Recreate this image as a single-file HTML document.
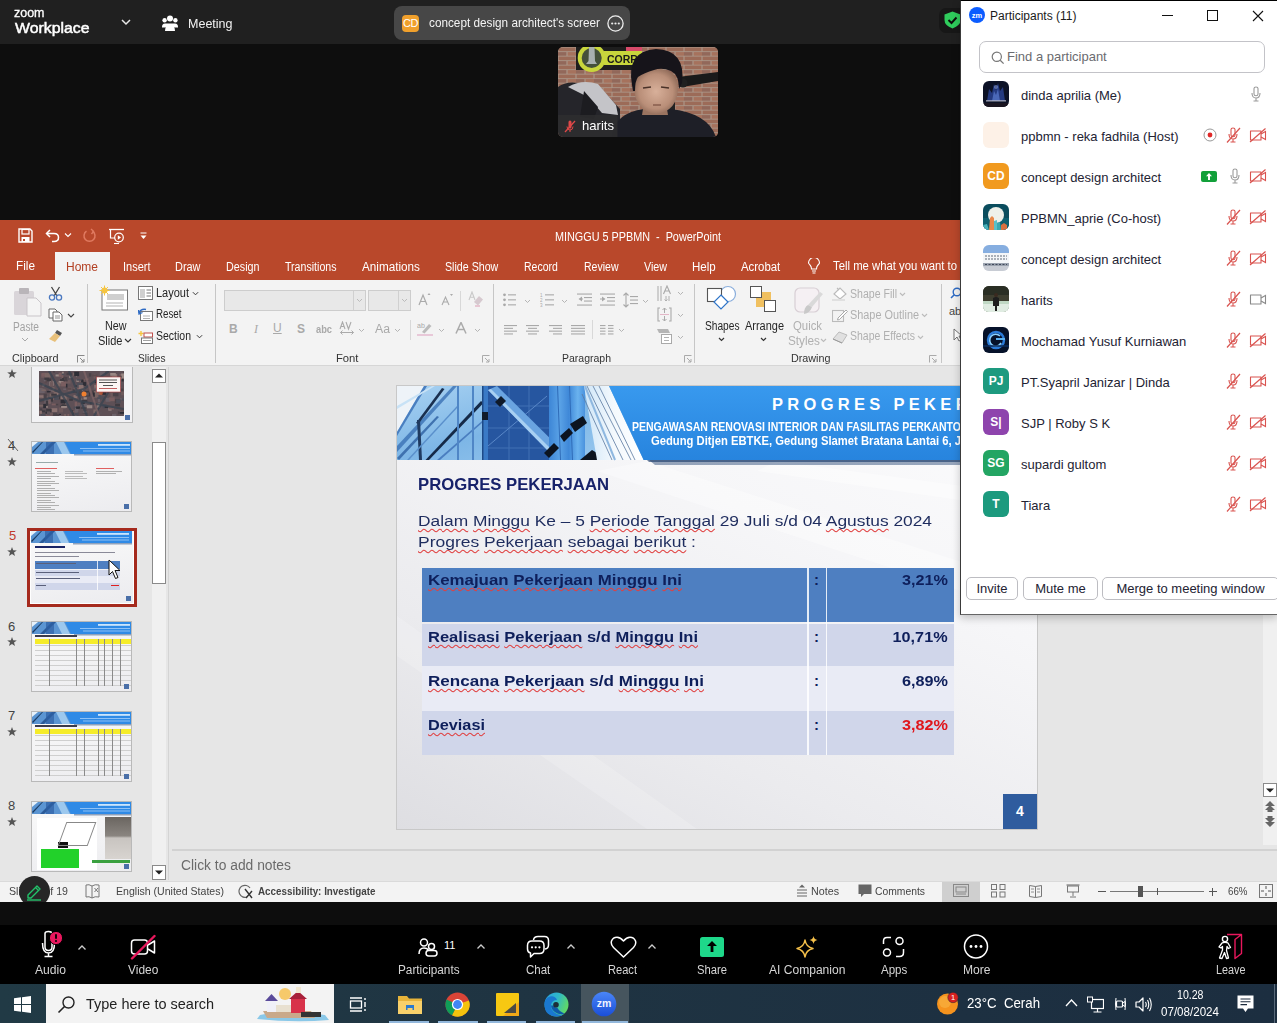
<!DOCTYPE html>
<html><head><meta charset="utf-8">
<style>
*{margin:0;padding:0;box-sizing:border-box}
html,body{width:1277px;height:1023px;overflow:hidden;background:#0e0e0e;font-family:"Liberation Sans",sans-serif;position:relative}
.abs{position:absolute}
.t{position:absolute;white-space:nowrap;line-height:1}
#topbar{left:0;top:0;width:1277px;height:44px;background:#202020}
#black{left:0;top:44px;width:1277px;height:176px;background:#0e0e0e}
#ppt{left:0;top:220px;width:1277px;height:682px;background:#e6e6e6}
#title{left:0;top:220px;width:1277px;height:60px;background:#b9482b}
#ribbon{left:0;top:280px;width:1277px;height:86px;background:#f3f3f3;border-bottom:1px solid #d6d6d6}
#band{left:0;top:902px;width:1277px;height:23px;background:#0d0d0d}
#ztool{left:0;top:925px;width:1277px;height:59px;background:#000}
#taskbar{left:0;top:984px;width:1277px;height:39px;background:linear-gradient(90deg,#213a45 0%,#1f3442 40%,#1d3041 75%,#1c2e40 100%)}
#panel{left:960px;top:0;width:317px;height:615px;background:#fff;border-left:1px solid #3a3a3a;border-top:1px solid #000;border-bottom:1px solid #666;box-shadow:0 3px 8px rgba(0,0,0,0.22)}
.av{left:22px;width:26px;height:26px;border-radius:6px;color:#fff;font-weight:700;font-size:12px;line-height:26px;text-align:center;overflow:hidden}
.nm{left:60px;font-size:13px;color:#232333}
.btn{border:1px solid #bdbdc2;border-radius:5px;font-size:13px;color:#232333;text-align:center;line-height:21px;background:#fff}
.zl{font-size:12.5px;color:#d6d6d6}
.sq{text-decoration:underline wavy #e04040;text-decoration-thickness:1px;text-underline-offset:2px;text-decoration-skip-ink:none}
.img1{background:radial-gradient(circle at 50% 35%,#5a7ac8 0%,#2a3a80 35%,#0d1230 75%,#080a18 100%)}
.img4{background:radial-gradient(circle at 50% 42%,#f4f4f0 0 28%,#0d5a6a 30%,#0a3a4a 100%)}
.img5{background:linear-gradient(180deg,#8ab0e0 0%,#a8c4e8 30%,#e8eef4 32%,#c8ccd8 55%,#f0f0f4 60%,#9aa0b0 80%,#e8e8ee 100%)}
.img6{background:linear-gradient(180deg,#3a3a2a 0%,#4a4a34 45%,#a8c8b0 60%,#d8e8d8 100%)}
.img7{background:radial-gradient(circle at 50% 50%,#4ab0f0 0%,#1a60b0 25%,#0a2a5a 50%,#040c20 100%)}
</style></head><body>
<div id="black" class="abs"></div>
<!-- TOP ZOOM BAR -->
<div id="topbar" class="abs">
  <div class="t" style="left: 14px; top: 6px; font-size: 13px; font-weight: 400; color: rgb(255, 255, 255); -webkit-text-stroke: 0.3px rgb(255, 255, 255); transform: scaleX(0.9592); transform-origin: left top;">zoom</div>
  <div class="t" style="left: 14.5px; top: 20px; font-size: 15.5px; font-weight: 400; color: rgb(255, 255, 255); -webkit-text-stroke: 0.5px rgb(255, 255, 255); transform: scaleX(1.0214); transform-origin: left top;">Workplace</div>
  <svg class="abs" style="left:120px;top:17px" width="12" height="10" viewBox="0 0 12 10"><path d="M2 3 L6 7 L10 3" stroke="#e8e8e8" stroke-width="1.5" fill="none"></path></svg>
  <svg class="abs" style="left:161px;top:14px" width="18" height="18" viewBox="0 0 18 18" fill="#fff">
    <circle cx="9" cy="4.5" r="3"></circle><circle cx="3.6" cy="6.3" r="2.2"></circle><circle cx="14.4" cy="6.3" r="2.2"></circle>
    <path d="M1 13 Q1 9.5 4 9.5 L14 9.5 Q17 9.5 17 13 L17 13.5 L1 13.5Z"></path>
    <path d="M4 17 Q4 11 9 11 Q14 11 14 17Z"></path>
  </svg>
  <div class="t" style="left: 188px; top: 16.5px; font-size: 13.5px; color: rgb(242, 242, 242); transform: scaleX(0.9265); transform-origin: left top;">Meeting</div>
  <div class="abs" style="left:394px;top:6px;width:236px;height:34px;background:#474747;border-radius:8px"></div>
  <div class="abs" style="left:402px;top:15px;width:17px;height:17px;background:#f0a02c;border-radius:4px;color:#fff;font-size:11px;line-height:17px;text-align:center;letter-spacing:-0.5px">CD</div>
  <div class="t" style="left: 428.6px; top: 16.5px; font-size: 12.8px; color: rgb(244, 244, 244); transform: scaleX(0.9195); transform-origin: left top;">concept design architect's screer</div>
  <svg class="abs" style="left:607px;top:15px" width="17" height="17" viewBox="0 0 17 17"><circle cx="8.5" cy="8.5" r="7.6" stroke="#eee" stroke-width="1.3" fill="none"></circle><circle cx="5.2" cy="8.5" r="1.1" fill="#eee"></circle><circle cx="8.5" cy="8.5" r="1.1" fill="#eee"></circle><circle cx="11.8" cy="8.5" r="1.1" fill="#eee"></circle></svg>
  <div class="abs" style="left:939px;top:8px;width:40px;height:25px;background:#171717;border-radius:7px"></div><svg class="abs" style="left:944px;top:11px" width="17" height="18" viewBox="0 0 17 18"><path d="M8.5 0.5 L16.5 3.5 L16.5 9 Q16.5 14.5 8.5 17.5 Q0.5 14.5 0.5 9 L0.5 3.5Z" fill="#2fcc5c"></path><path d="M4.5 9 L7.5 12 L12.5 6.5" stroke="#0c0c0c" stroke-width="1.9" fill="none"></path></svg>
</div>
<!-- VIDEO -->
<div class="abs" style="left:558px;top:47px;width:160px;height:90px;border-radius:5px;overflow:hidden;background:#8a6a5a">
  <svg width="160" height="90" viewBox="0 0 160 90" style="filter:blur(0.4px)">
    <defs>
      <pattern id="brick" width="18" height="9" patternUnits="userSpaceOnUse">
        <rect width="18" height="9" fill="#b9a595"></rect>
        <rect x="0.6" y="0.6" width="16.8" height="3.6" fill="#a8725c"></rect>
        <rect x="-8.4" y="5.1" width="16.8" height="3.6" fill="#9c6e5e"></rect>
        <rect x="9.6" y="5.1" width="16.8" height="3.6" fill="#b47a62"></rect>
      </pattern>
      <radialGradient id="face" cx="50%" cy="50%" r="55%"><stop offset="0" stop-color="#d8b09a"></stop><stop offset="0.7" stop-color="#b98e78"></stop><stop offset="1" stop-color="#8e6a58"></stop></radialGradient>
    </defs>
    <rect width="160" height="90" fill="url(#brick)"></rect>
    <rect width="160" height="90" fill="#6a5048" opacity="0.18"></rect>
    <rect x="18" y="0" width="66" height="23" fill="#1e1e1e"></rect>
    <circle cx="33.7" cy="11" r="14" fill="#c8d63c"></circle>
    <circle cx="33.7" cy="11" r="10" fill="#44503a"></circle>
    <path d="M31 0 L36.5 0 L37 14 L39 17 L28 17 L30.5 14Z" fill="#a8b0b0"></path>
    <rect x="46" y="4" width="38" height="14" fill="#c8d63c"></rect>
    <rect x="46" y="4" width="4" height="14" fill="#c8d63c"></rect>
    <text x="49" y="15.7" font-family="Liberation Sans" font-weight="700" font-size="10.5" fill="#1a1a1a">CORR</text>
    <rect x="68" y="0" width="16" height="4" fill="#d84a6a"></rect>
    <path d="M0 40 Q8 34 20 36 L40 38 L62 62 L62 90 L0 90Z" fill="#25252a"></path>
    <path d="M10 40 Q24 32 40 37 L58 58 L60 68 L44 66 L30 50 L18 44Z" fill="#c4c4c8"></path>
    <path d="M26 44 L40 60 L36 72 L22 70Z" fill="#1c1c20"></path>
    <path d="M120 30 L160 25 L160 34 L124 40Z" fill="#1a1a1a"></path>
    <circle cx="125" cy="36" r="4.5" fill="#202020"></circle>
    <rect x="110" y="36" width="7" height="30" fill="#222"></rect>
    <path d="M54 90 Q56 66 86 62 L112 62 Q150 66 158 90Z" fill="#1e1f27"></path>
    <path d="M86 56 L108 56 L110 68 L84 68Z" fill="#9a7460"></path>
    <path d="M76 38 Q76 22 98 22 Q120 22 120 40 Q120 64 98 67 Q76 64 76 38Z" fill="url(#face)"></path>
    <path d="M74 38 Q68 4 98 2 Q128 3 124 36 L121 42 Q121 28 113 24 Q104 20 96 23 Q86 26 80 30 Q77 34 77 44 L75 44Z" fill="#16141a"></path>
    <path d="M85 41 L93 40 M103 40 L111 41" stroke="#4a3228" stroke-width="1.6"></path>
    <path d="M95 58 L103 58" stroke="#7a5040" stroke-width="1.2"></path>
    <rect x="0" y="68" width="59.5" height="22" fill="#2e2e30" opacity="0.8"></rect>
  </svg>
  <svg class="abs" style="left:6px;top:73px" width="12" height="13" viewBox="0 0 12 13"><path d="M4.5 2 Q4.5 0.5 6 0.5 Q7.5 0.5 7.5 2 L7.5 7 Q7.5 8.5 6 8.5 Q4.5 8.5 4.5 7Z" fill="#e04848"></path><path d="M3 6.5 Q3 10 6 10 Q9 10 9 6.5 M6 10 L6 12" stroke="#e04848" stroke-width="1" fill="none"></path><path d="M1 12 L11 1" stroke="#e04848" stroke-width="1.3"></path></svg>
  <div class="t" style="left: 24px; top: 72px; font-size: 13px; color: rgb(255, 255, 255); transform: scaleX(1.0064); transform-origin: left top;">harits</div>
</div>
<!-- POWERPOINT -->
<div id="ppt" class="abs"></div>
<div id="title" class="abs"></div>
    <!-- QAT -->
    <svg class="abs" style="left:18px;top:228px" width="15" height="15" viewBox="0 0 15 15"><path d="M1 1 H12 L14 3 V14 H1Z" fill="none" stroke="#fff" stroke-width="1.4"></path><rect x="4" y="1.5" width="7" height="4.5" fill="none" stroke="#fff" stroke-width="1.2"></rect><rect x="3.5" y="9" width="8" height="5" fill="#fff"></rect><rect x="5" y="11" width="2" height="2" fill="#b9482b"></rect></svg>
    <svg class="abs" style="left:45px;top:228px" width="16" height="16" viewBox="0 0 16 16"><path d="M5 2 L1.5 5.5 L5 9" fill="none" stroke="#fff" stroke-width="1.5"></path><path d="M2 5.5 H9 Q13.5 5.5 13.5 9.5 Q13.5 13.5 9 13.5 H7" fill="none" stroke="#fff" stroke-width="1.5"></path></svg>
    <svg class="abs" style="left:64px;top:232px" width="8" height="6" viewBox="0 0 8 6"><path d="M1 1.5 L4 4.5 L7 1.5" fill="none" stroke="#fff" stroke-width="1.1"></path></svg>
    <svg class="abs" style="left:82px;top:228px" width="15" height="15" viewBox="0 0 15 15"><path d="M10.5 3.2 A5.5 5.5 0 1 1 4.5 3.2" fill="none" stroke="#e07a60" stroke-width="1.5"></path><path d="M9 1 L11.5 3.3 L9.5 6" fill="none" stroke="#e07a60" stroke-width="1.4"></path></svg>
    <svg class="abs" style="left:108px;top:228px" width="17" height="17" viewBox="0 0 17 17"><path d="M1 1.5 H16" stroke="#fff" stroke-width="1.3"></path><path d="M2.5 2 V10 H7" fill="none" stroke="#fff" stroke-width="1.2"></path><circle cx="11" cy="9.5" r="4.3" fill="none" stroke="#fff" stroke-width="1.2"></circle><path d="M9.8 7.3 L13 9.5 L9.8 11.7Z" fill="#fff"></path><path d="M6 15.5 H11" stroke="#fff" stroke-width="1.1"></path></svg>
    <svg class="abs" style="left:140px;top:232px" width="7" height="8" viewBox="0 0 7 8"><path d="M0.5 1 H6.5" stroke="#fff" stroke-width="1"></path><path d="M0.5 3.5 L3.5 7 L6.5 3.5Z" fill="#fff"></path></svg>
    <div class="t" style="left: 555px; top: 231px; font-size: 12px; color: rgb(255, 255, 255); white-space: pre; transform: scaleX(0.9019); transform-origin: left top;">MINGGU 5 PPBMN  -  PowerPoint</div>
    <!-- tabs -->
    <div class="abs" style="left:55px;top:252px;width:55px;height:28px;background:#f3f3f3"></div>
    <div class="t" style="left: 16px; top: 260px; font-size: 12px; color: rgb(255, 255, 255); transform: scaleX(0.9822); transform-origin: left top;">File</div>
    <div class="t" style="left: 66px; top: 261px; font-size: 12px; color: rgb(178, 63, 34); transform: scaleX(0.9995); transform-origin: left top;">Home</div>
    <div class="t" style="left: 122.5px; top: 261px; font-size: 12px; color: rgb(255, 255, 255); transform: scaleX(0.9162); transform-origin: left top;">Insert</div>
    <div class="t" style="left: 174.5px; top: 261px; font-size: 12px; color: rgb(255, 255, 255); transform: scaleX(0.9102); transform-origin: left top;">Draw</div>
    <div class="t" style="left: 226px; top: 261px; font-size: 12px; color: rgb(255, 255, 255); transform: scaleX(0.8967); transform-origin: left top;">Design</div>
    <div class="t" style="left: 285px; top: 261px; font-size: 12px; color: rgb(255, 255, 255); transform: scaleX(0.8841); transform-origin: left top;">Transitions</div>
    <div class="t" style="left: 362px; top: 261px; font-size: 12px; color: rgb(255, 255, 255); transform: scaleX(0.9768); transform-origin: left top;">Animations</div>
    <div class="t" style="left: 445px; top: 261px; font-size: 12px; color: rgb(255, 255, 255); transform: scaleX(0.8876); transform-origin: left top;">Slide Show</div>
    <div class="t" style="left: 524px; top: 261px; font-size: 12px; color: rgb(255, 255, 255); transform: scaleX(0.8737); transform-origin: left top;">Record</div>
    <div class="t" style="left: 583.5px; top: 261px; font-size: 12px; color: rgb(255, 255, 255); transform: scaleX(0.8765); transform-origin: left top;">Review</div>
    <div class="t" style="left: 644px; top: 261px; font-size: 12px; color: rgb(255, 255, 255); transform: scaleX(0.8916); transform-origin: left top;">View</div>
    <div class="t" style="left: 692px; top: 261px; font-size: 12px; color: rgb(255, 255, 255); transform: scaleX(0.96); transform-origin: left top;">Help</div>
    <div class="t" style="left: 741px; top: 261px; font-size: 12px; color: rgb(255, 255, 255); transform: scaleX(0.9478); transform-origin: left top;">Acrobat</div>
    <svg class="abs" style="left:807px;top:258px" width="14" height="16" viewBox="0 0 14 16"><path d="M4.5 11 Q4.5 8.5 3 7 Q1.5 5.3 1.5 5 A5.5 5.5 0 1 1 12.5 5 Q12.5 5.5 11 7 Q9.5 8.5 9.5 11Z" fill="none" stroke="#fff" stroke-width="1.1"></path><path d="M5 13 H9 M5.5 15 H8.5" stroke="#fff" stroke-width="1.1"></path></svg>
    <div class="t" style="left: 833px; top: 260px; font-size: 12px; color: rgb(255, 255, 255); transform: scaleX(0.9436); transform-origin: left top;">Tell me what you want to</div>
<div id="ribbon" class="abs"></div>
<!-- Clipboard group -->
<svg class="abs" style="left:13px;top:287px" width="29" height="30" viewBox="0 0 29 30"><rect x="1" y="4" width="20" height="24" rx="1.5" fill="#d9d5d9"></rect><rect x="6" y="1" width="10" height="6" rx="1" fill="#b9b5b9"></rect><path d="M14 11 H23 L28 16 V29 H14Z" fill="#f4f4f4" stroke="#c9c5c9" stroke-width="1"></path></svg>
<div class="t" style="left: 12.5px; top: 321px; font-size: 12px; color: rgb(163, 163, 163); transform: scaleX(0.8473); transform-origin: left top;">Paste</div>
<svg class="abs" style="left:21px;top:337px" width="8" height="5" viewBox="0 0 8 5"><path d="M1 1 L4 4 L7 1" fill="none" stroke="#a8a8a8" stroke-width="1"></path></svg>
<svg class="abs" style="left:48px;top:286px" width="15" height="15" viewBox="0 0 15 15"><path d="M3.5 1 L9 10 M11.5 1 L6 10" stroke="#444" stroke-width="1.3"></path><circle cx="4" cy="11.5" r="2.6" fill="none" stroke="#4a78c0" stroke-width="1.3"></circle><circle cx="11" cy="11.5" r="2.6" fill="none" stroke="#4a78c0" stroke-width="1.3"></circle></svg>
<svg class="abs" style="left:48px;top:308px" width="15" height="14" viewBox="0 0 15 14"><path d="M1 1 H7 L9 3 V10 H1Z" fill="#fff" stroke="#666" stroke-width="1"></path><path d="M5 4 H11 L14 7 V13 H5Z" fill="#fff" stroke="#666" stroke-width="1"></path><path d="M7 8 H12 M7 10 H12" stroke="#777" stroke-width="0.8"></path></svg>
<svg class="abs" style="left:67px;top:313px" width="8" height="5" viewBox="0 0 8 5"><path d="M1 1 L4 4 L7 1" fill="none" stroke="#444" stroke-width="1.1"></path></svg>
<svg class="abs" style="left:48px;top:329px" width="15" height="14" viewBox="0 0 15 14"><path d="M9 1 L14 4 L12 7 L7 4Z" fill="#555"></path><path d="M7 4 L12 7 L7 13 L1 10Z" fill="#e8c07a"></path></svg>
<div class="t" style="left: 12px; top: 353px; font-size: 11px; color: rgb(51, 51, 51); transform: scaleX(0.9874); transform-origin: left top;">Clipboard</div>
<svg class="abs" style="left:77px;top:355px" width="8" height="8" viewBox="0 0 8 8"><path d="M0.5 7.5 V0.5 H7.5" fill="none" stroke="#888" stroke-width="1"></path><path d="M3 3 L7 7 M4 7 H7 V4" fill="none" stroke="#888" stroke-width="1"></path></svg>
<div class="abs" style="left:87px;top:284px;width:1px;height:79px;background:#c6c6c6"></div>
<!-- Slides group -->
<svg class="abs" style="left:99px;top:285px" width="30" height="27" viewBox="0 0 30 27"><rect x="3" y="5" width="25.5" height="20" fill="#fff" stroke="#777" stroke-width="1"></rect><rect x="8" y="9" width="17" height="6" fill="#cfcfcf"></rect><path d="M7 18 H24 M7 21 H24" stroke="#aaa" stroke-width="0.9"></path><circle cx="5.5" cy="5.5" r="3" fill="#f5c542"></circle><path d="M5.5 0.5 V10.5 M0.5 5.5 H10.5 M2 2 L9 9 M9 2 L2 9" stroke="#f5c542" stroke-width="1"></path></svg>
<div class="t" style="left: 104.5px; top: 320px; font-size: 12px; color: rgb(38, 38, 38); transform: scaleX(0.8953); transform-origin: left top;">New</div>
<div class="t" style="left: 98px; top: 335px; font-size: 12px; color: rgb(38, 38, 38); transform: scaleX(0.918); transform-origin: left top;">Slide</div>
<svg class="abs" style="left:124px;top:338px" width="8" height="5" viewBox="0 0 8 5"><path d="M1 1 L4 4 L7 1" fill="none" stroke="#333" stroke-width="1.1"></path></svg>
<svg class="abs" style="left:138px;top:286px" width="15" height="14" viewBox="0 0 15 14"><rect x="0.5" y="0.5" width="14" height="13" fill="#fff" stroke="#777" stroke-width="1"></rect><rect x="2" y="3" width="5" height="9" fill="#cfcfcf"></rect><path d="M8.5 4 H13 M8.5 7 H13 M8.5 10 H13" stroke="#777" stroke-width="1"></path></svg>
<div class="t" style="left: 156px; top: 287px; font-size: 12px; color: rgb(38, 38, 38); transform: scaleX(0.9159); transform-origin: left top;">Layout</div>
<svg class="abs" style="left:192px;top:291px" width="7" height="5" viewBox="0 0 8 5"><path d="M1 1 L4 4 L7 1" fill="none" stroke="#333" stroke-width="1.1"></path></svg>
<svg class="abs" style="left:138px;top:308px" width="15" height="13" viewBox="0 0 15 13"><rect x="2.5" y="3.5" width="12" height="9" fill="#fff" stroke="#777" stroke-width="1"></rect><path d="M5 8 H12 M5 10.5 H12" stroke="#aaa" stroke-width="0.9"></path><path d="M1 5 Q3 0.5 8 1.5" fill="none" stroke="#2e6bc4" stroke-width="1.5"></path><path d="M0.5 2 L1 6 L4.5 4.5" fill="none" stroke="#2e6bc4" stroke-width="1.3"></path></svg>
<div class="t" style="left: 156px; top: 308px; font-size: 12px; color: rgb(38, 38, 38); transform: scaleX(0.8132); transform-origin: left top;">Reset</div>
<svg class="abs" style="left:138px;top:330px" width="15" height="14" viewBox="0 0 15 14"><path d="M3 1 V6 M0.5 3.5 H5.5" stroke="#f5c542" stroke-width="1.4"></path><rect x="6" y="3" width="8.5" height="4" fill="#fff" stroke="#c0504d" stroke-width="1"></rect><rect x="3.5" y="8" width="11" height="5.5" fill="#fff" stroke="#777" stroke-width="1"></rect><path d="M5 10.5 H13" stroke="#999" stroke-width="0.9"></path></svg>
<div class="t" style="left: 156px; top: 330px; font-size: 12px; color: rgb(38, 38, 38); transform: scaleX(0.8743); transform-origin: left top;">Section</div>
<svg class="abs" style="left:196px;top:334px" width="7" height="5" viewBox="0 0 8 5"><path d="M1 1 L4 4 L7 1" fill="none" stroke="#333" stroke-width="1.1"></path></svg>
<div class="t" style="left: 138px; top: 353px; font-size: 11px; color: rgb(51, 51, 51); transform: scaleX(0.9176); transform-origin: left top;">Slides</div>
<div class="abs" style="left:215px;top:284px;width:1px;height:79px;background:#c6c6c6"></div>
<!-- Font group -->
<div class="abs" style="left:224px;top:290px;width:142px;height:21px;background:#e8e8e8;border:1px solid #cdcdcd"></div>
<div class="abs" style="left:353px;top:291px;width:1px;height:19px;background:#d0d0d0"></div>
<svg class="abs" style="left:356px;top:298px" width="7" height="5" viewBox="0 0 7 5"><path d="M1 1 L3.5 3.5 L6 1" fill="none" stroke="#bbb" stroke-width="1"></path></svg>
<div class="abs" style="left:368px;top:290px;width:43px;height:21px;background:#e8e8e8;border:1px solid #cdcdcd"></div>
<div class="abs" style="left:398px;top:291px;width:1px;height:19px;background:#d0d0d0"></div>
<svg class="abs" style="left:401px;top:298px" width="7" height="5" viewBox="0 0 7 5"><path d="M1 1 L3.5 3.5 L6 1" fill="none" stroke="#bbb" stroke-width="1"></path></svg>
<svg class="abs" style="left:418px;top:292px" width="14" height="14" viewBox="0 0 14 14"><path d="M1 13 L5 3 L9 13 M2.5 9.5 H7.5" fill="none" stroke="#aaa" stroke-width="1.2"></path><path d="M9.5 3 L11 1 L12.5 3Z" fill="#aaa"></path></svg>
<svg class="abs" style="left:441px;top:293px" width="13" height="13" viewBox="0 0 13 13"><path d="M1 12 L4.5 4 L8 12 M2.3 9 H6.7" fill="none" stroke="#aaa" stroke-width="1.1"></path><path d="M9 1 L10.5 3 L12 1Z" fill="#aaa"></path></svg>
<div class="abs" style="left:460px;top:291px;width:1px;height:20px;background:#d8d8d8"></div>
<svg class="abs" style="left:468px;top:291px" width="16" height="16" viewBox="0 0 16 16"><path d="M1 9 L4 1 L7 9 M2 6.3 H6" fill="none" stroke="#c9c9c9" stroke-width="1.1"></path><path d="M6 11 L11 5 L15 8.5 L10 14.5Z" fill="#d6c9cf"></path><path d="M7 15 H12" stroke="#e3b7c7" stroke-width="1.5"></path></svg>
<div class="t" style="left:229px;top:323px;font-size:12px;font-weight:700;color:#a9a9a9">B</div>
<div class="t" style="left:254px;top:323px;font-size:12px;font-style:italic;color:#a9a9a9;font-family:'Liberation Serif'">I</div>
<div class="t" style="left:273px;top:322px;font-size:12px;color:#a9a9a9;text-decoration:underline">U</div>
<div class="t" style="left:297px;top:323px;font-size:12px;font-weight:700;color:#a9a9a9">S</div>
<div class="t" style="left: 316px; top: 324px; font-size: 11px; font-weight: 700; color: rgb(169, 169, 169); transform: scaleX(0.8435); transform-origin: left top;">abc</div>
<svg class="abs" style="left:339px;top:321px" width="16" height="14" viewBox="0 0 16 14"><path d="M1 8 L3.5 1 L6 8 M1.8 5.5 H5.2 M7 1 L9.5 8 L12 1" fill="none" stroke="#aaa" stroke-width="1.1"></path><path d="M1.5 11.5 H14.5 M3.5 9.5 L1.5 11.5 L3.5 13.5 M12.5 9.5 L14.5 11.5 L12.5 13.5" fill="none" stroke="#aaa" stroke-width="1"></path></svg>
<svg class="abs" style="left:358px;top:328px" width="7" height="5" viewBox="0 0 7 5"><path d="M1 1 L3.5 3.5 L6 1" fill="none" stroke="#b5b5b5" stroke-width="1"></path></svg>
<div class="t" style="left: 375px; top: 323px; font-size: 12px; color: rgb(169, 169, 169); transform: scaleX(1.0213); transform-origin: left top;">Aa</div>
<svg class="abs" style="left:394px;top:328px" width="7" height="5" viewBox="0 0 7 5"><path d="M1 1 L3.5 3.5 L6 1" fill="none" stroke="#b5b5b5" stroke-width="1"></path></svg>
<div class="abs" style="left:410px;top:320px;width:1px;height:20px;background:#d8d8d8"></div>
<svg class="abs" style="left:417px;top:321px" width="16" height="15" viewBox="0 0 16 15"><text x="0" y="7" font-family="Liberation Sans" font-size="7" fill="#aaa">ab</text><path d="M5 11 L12 3 L14.5 5 L7.5 12.5Z" fill="#bbb"></path><rect x="0" y="13" width="16" height="2" fill="#e8c8d8"></rect></svg>
<svg class="abs" style="left:438px;top:328px" width="7" height="5" viewBox="0 0 7 5"><path d="M1 1 L3.5 3.5 L6 1" fill="none" stroke="#b5b5b5" stroke-width="1"></path></svg>
<svg class="abs" style="left:455px;top:322px" width="12" height="12" viewBox="0 0 12 12"><path d="M1 11.5 L6 0.5 L11 11.5 M3 7.5 H9" fill="none" stroke="#aaa" stroke-width="1.5"></path></svg>
<svg class="abs" style="left:474px;top:328px" width="7" height="5" viewBox="0 0 7 5"><path d="M1 1 L3.5 3.5 L6 1" fill="none" stroke="#b5b5b5" stroke-width="1"></path></svg>
<div class="t" style="left: 335.5px; top: 353px; font-size: 11px; color: rgb(51, 51, 51); transform: scaleX(1.022); transform-origin: left top;">Font</div>
<svg class="abs" style="left:482px;top:355px" width="8" height="8" viewBox="0 0 8 8"><path d="M0.5 7.5 V0.5 H7.5" fill="none" stroke="#aaa" stroke-width="1"></path><path d="M3 3 L7 7 M4 7 H7 V4" fill="none" stroke="#aaa" stroke-width="1"></path></svg>
<div class="abs" style="left:493px;top:284px;width:1px;height:79px;background:#c6c6c6"></div>
<!-- Paragraph group -->
<svg class="abs" style="left:503px;top:293px" width="14" height="14" viewBox="0 0 14 14"><circle cx="1.5" cy="1.8" r="1.4" fill="#a9a9a9"></circle><circle cx="1.5" cy="6.8" r="1.4" fill="#a9a9a9"></circle><circle cx="1.5" cy="11.8" r="1.4" fill="#a9a9a9"></circle><rect x="5" y="1.3" width="8" height="1.1" fill="#a9a9a9"></rect><rect x="5" y="6.3" width="8" height="1.1" fill="#a9a9a9"></rect><rect x="5" y="11.3" width="8" height="1.1" fill="#a9a9a9"></rect></svg>
<svg class="abs" style="left:524px;top:299px" width="7" height="5" viewBox="0 0 7 5"><path d="M1 1 L3.5 3.5 L6 1" fill="none" stroke="#b5b5b5" stroke-width="1"></path></svg>
<svg class="abs" style="left:540px;top:293px" width="15" height="14" viewBox="0 0 15 14"><text x="0" y="4" font-size="4.5" font-family="Liberation Sans" fill="#a9a9a9">1</text><text x="0" y="9" font-size="4.5" font-family="Liberation Sans" fill="#a9a9a9">2</text><text x="0" y="14" font-size="4.5" font-family="Liberation Sans" fill="#a9a9a9">3</text><rect x="5" y="1.3" width="9" height="1.1" fill="#a9a9a9"></rect><rect x="5" y="6.3" width="9" height="1.1" fill="#a9a9a9"></rect><rect x="5" y="11.3" width="9" height="1.1" fill="#a9a9a9"></rect></svg>
<svg class="abs" style="left:561px;top:299px" width="7" height="5" viewBox="0 0 7 5"><path d="M1 1 L3.5 3.5 L6 1" fill="none" stroke="#b5b5b5" stroke-width="1"></path></svg>
<svg class="abs" style="left:577px;top:293px" width="15" height="13" viewBox="0 0 15 13"><rect x="0" y="0.5" width="15" height="1.1" fill="#a9a9a9"></rect><rect x="7" y="4" width="8" height="1.1" fill="#a9a9a9"></rect><rect x="7" y="7.5" width="8" height="1.1" fill="#a9a9a9"></rect><rect x="0" y="11.5" width="15" height="1.1" fill="#a9a9a9"></rect><path d="M5 3.5 L1.5 6 L5 8.5Z" fill="#a9a9a9"></path><rect x="3" y="5.5" width="3" height="1" fill="#a9a9a9"></rect></svg>
<svg class="abs" style="left:600px;top:293px" width="15" height="13" viewBox="0 0 15 13"><rect x="0" y="0.5" width="15" height="1.1" fill="#a9a9a9"></rect><rect x="7" y="4" width="8" height="1.1" fill="#a9a9a9"></rect><rect x="7" y="7.5" width="8" height="1.1" fill="#a9a9a9"></rect><rect x="0" y="11.5" width="15" height="1.1" fill="#a9a9a9"></rect><path d="M2 3.5 L5.5 6 L2 8.5Z" fill="#a9a9a9"></path><rect x="0" y="5.5" width="3" height="1" fill="#a9a9a9"></rect></svg>
<svg class="abs" style="left:623px;top:292px" width="15" height="16" viewBox="0 0 15 16"><path d="M3 1 V15 M0.5 3.5 L3 1 L5.5 3.5 M0.5 12.5 L3 15 L5.5 12.5" fill="none" stroke="#a9a9a9" stroke-width="1.1"></path><rect x="7" y="4" width="8" height="1.1" fill="#a9a9a9"></rect><rect x="7" y="7.5" width="8" height="1.1" fill="#a9a9a9"></rect><rect x="7" y="11" width="8" height="1.1" fill="#a9a9a9"></rect></svg>
<svg class="abs" style="left:642px;top:299px" width="7" height="5" viewBox="0 0 7 5"><path d="M1 1 L3.5 3.5 L6 1" fill="none" stroke="#b5b5b5" stroke-width="1"></path></svg>
<svg class="abs" style="left:657px;top:285px" width="15" height="17" viewBox="0 0 15 17"><path d="M1 1 V16 M4 1 V16" stroke="#a9a9a9" stroke-width="1"></path><path d="M6.5 9 L10 1 L13.5 9 M7.8 6 H12.2" fill="none" stroke="#a9a9a9" stroke-width="1.1"></path><path d="M9 11 V16 M12 11 V16 M7.5 14.5 L9 16 L10.5 14.5" fill="none" stroke="#a9a9a9" stroke-width="0.9"></path></svg>
<svg class="abs" style="left:677px;top:291px" width="7" height="5" viewBox="0 0 7 5"><path d="M1 1 L3.5 3.5 L6 1" fill="none" stroke="#b5b5b5" stroke-width="1"></path></svg>
<svg class="abs" style="left:657px;top:307px" width="15" height="15" viewBox="0 0 15 15"><path d="M3 1 H1 V14 H3 M12 1 H14 V14 H12" fill="none" stroke="#a9a9a9" stroke-width="1.1"></path><path d="M7.5 1 V6 M5.5 3 L7.5 1 L9.5 3 M7.5 9 V14 M5.5 12 L7.5 14 L9.5 12" fill="none" stroke="#a9a9a9" stroke-width="1"></path><rect x="3" y="7" width="9" height="1" fill="#e3b7c7"></rect></svg>
<svg class="abs" style="left:677px;top:313px" width="7" height="5" viewBox="0 0 7 5"><path d="M1 1 L3.5 3.5 L6 1" fill="none" stroke="#b5b5b5" stroke-width="1"></path></svg>
<svg class="abs" style="left:657px;top:329px" width="15" height="15" viewBox="0 0 15 15"><path d="M0 0 H11 L13 4 H2Z" fill="#b5b5b5"></path><rect x="4.5" y="5.5" width="10" height="9" fill="#fff" stroke="#a9a9a9" stroke-width="1"></rect><path d="M7 8.5 H12 M7 11.5 H12" stroke="#a9a9a9" stroke-width="0.9"></path></svg>
<svg class="abs" style="left:677px;top:335px" width="7" height="5" viewBox="0 0 7 5"><path d="M1 1 L3.5 3.5 L6 1" fill="none" stroke="#b5b5b5" stroke-width="1"></path></svg>
<svg class="abs" style="left:504px;top:325px" width="14" height="10" viewBox="0 0 14 10"><rect x="0" y="0.0" width="13" height="1.1" fill="#a9a9a9"></rect><rect x="0" y="2.8" width="9" height="1.1" fill="#a9a9a9"></rect><rect x="0" y="5.6" width="13" height="1.1" fill="#a9a9a9"></rect><rect x="0" y="8.399999999999999" width="9" height="1.1" fill="#a9a9a9"></rect></svg>
<svg class="abs" style="left:526px;top:325px" width="14" height="10" viewBox="0 0 14 10"><rect x="0" y="0.0" width="13" height="1.1" fill="#a9a9a9"></rect><rect x="2" y="2.8" width="9" height="1.1" fill="#a9a9a9"></rect><rect x="0" y="5.6" width="13" height="1.1" fill="#a9a9a9"></rect><rect x="2" y="8.399999999999999" width="9" height="1.1" fill="#a9a9a9"></rect></svg>
<svg class="abs" style="left:549px;top:325px" width="14" height="10" viewBox="0 0 14 10"><rect x="0" y="0.0" width="13" height="1.1" fill="#a9a9a9"></rect><rect x="4" y="2.8" width="9" height="1.1" fill="#a9a9a9"></rect><rect x="0" y="5.6" width="13" height="1.1" fill="#a9a9a9"></rect><rect x="4" y="8.399999999999999" width="9" height="1.1" fill="#a9a9a9"></rect></svg>
<svg class="abs" style="left:571px;top:325px" width="14" height="10" viewBox="0 0 14 10"><rect x="0" y="0.0" width="14" height="1.1" fill="#a9a9a9"></rect><rect x="0" y="2.8" width="14" height="1.1" fill="#a9a9a9"></rect><rect x="0" y="5.6" width="14" height="1.1" fill="#a9a9a9"></rect><rect x="0" y="8.399999999999999" width="14" height="1.1" fill="#a9a9a9"></rect></svg>
<div class="abs" style="left:592px;top:320px;width:1px;height:19px;background:#d8d8d8"></div>
<svg class="abs" style="left:600px;top:325px" width="14" height="10" viewBox="0 0 14 10"><rect x="0" y="0.0" width="5.5" height="1.1" fill="#a9a9a9"></rect><rect x="8" y="0.0" width="5.5" height="1.1" fill="#a9a9a9"></rect><rect x="0" y="2.8" width="5.5" height="1.1" fill="#a9a9a9"></rect><rect x="8" y="2.8" width="5.5" height="1.1" fill="#a9a9a9"></rect><rect x="0" y="5.6" width="5.5" height="1.1" fill="#a9a9a9"></rect><rect x="8" y="5.6" width="5.5" height="1.1" fill="#a9a9a9"></rect><rect x="0" y="8.399999999999999" width="5.5" height="1.1" fill="#a9a9a9"></rect><rect x="8" y="8.399999999999999" width="5.5" height="1.1" fill="#a9a9a9"></rect></svg>
<svg class="abs" style="left:618px;top:328px" width="7" height="5" viewBox="0 0 7 5"><path d="M1 1 L3.5 3.5 L6 1" fill="none" stroke="#b5b5b5" stroke-width="1"></path></svg>
<div class="t" style="left: 561.5px; top: 353px; font-size: 11px; color: rgb(51, 51, 51); transform: scaleX(0.9538); transform-origin: left top;">Paragraph</div>
<svg class="abs" style="left:684px;top:355px" width="8" height="8" viewBox="0 0 8 8"><path d="M0.5 7.5 V0.5 H7.5" fill="none" stroke="#aaa" stroke-width="1"></path><path d="M3 3 L7 7 M4 7 H7 V4" fill="none" stroke="#aaa" stroke-width="1"></path></svg>
<div class="abs" style="left:694px;top:284px;width:1px;height:79px;background:#c6c6c6"></div>
<!-- Drawing group -->
<svg class="abs" style="left:706px;top:285px" width="31" height="30" viewBox="0 0 31 30"><circle cx="22" cy="9" r="7.5" fill="#fff" stroke="#8aaedc" stroke-width="1.2"></circle><rect x="1.5" y="3.5" width="14" height="13" fill="#fff" stroke="#555" stroke-width="1.1"></rect><path d="M15 10 L22 17 L15 24 L8 17Z" fill="#fff" stroke="#2e74c8" stroke-width="1.2"></path></svg>
<div class="t" style="left: 704.5px; top: 320px; font-size: 12px; color: rgb(38, 38, 38); transform: scaleX(0.8476); transform-origin: left top;">Shapes</div>
<svg class="abs" style="left:718px;top:337px" width="7" height="5" viewBox="0 0 7 5"><path d="M1 1 L3.5 3.5 L6 1" fill="none" stroke="#333" stroke-width="1.2"></path></svg>
<svg class="abs" style="left:750px;top:286px" width="27" height="27" viewBox="0 0 27 27"><rect x="6" y="6" width="15" height="15" fill="#f0c060"></rect><rect x="0.5" y="0.5" width="11" height="11" fill="#fff" stroke="#555" stroke-width="1"></rect><rect x="14.5" y="14.5" width="11" height="11" fill="#fff" stroke="#555" stroke-width="1"></rect></svg>
<div class="t" style="left: 744.5px; top: 320px; font-size: 12px; color: rgb(38, 38, 38); transform: scaleX(0.9133); transform-origin: left top;">Arrange</div>
<svg class="abs" style="left:760px;top:337px" width="7" height="5" viewBox="0 0 7 5"><path d="M1 1 L3.5 3.5 L6 1" fill="none" stroke="#333" stroke-width="1.2"></path></svg>
<svg class="abs" style="left:794px;top:287px" width="30" height="29" viewBox="0 0 30 29"><rect x="1" y="1" width="24" height="24" rx="5" fill="#f5f0f3" stroke="#d8cfd5" stroke-width="1.2"></rect><path d="M29 7 L18 20 L14 18 L26 5Z" fill="#d9d9d9"></path><path d="M14 18 Q10 20 10 27 Q16 26 18 20Z" fill="#c9c9c9"></path></svg>
<div class="t" style="left: 793px; top: 320px; font-size: 12px; color: rgb(176, 176, 176); transform: scaleX(0.945); transform-origin: left top;">Quick</div>
<div class="t" style="left: 788px; top: 335px; font-size: 12px; color: rgb(176, 176, 176); transform: scaleX(0.979); transform-origin: left top;">Styles</div>
<svg class="abs" style="left:820px;top:338px" width="7" height="5" viewBox="0 0 7 5"><path d="M1 1 L3.5 3.5 L6 1" fill="none" stroke="#bbb" stroke-width="1.1"></path></svg>
<svg class="abs" style="left:832px;top:286px" width="16" height="15" viewBox="0 0 16 15"><path d="M2 8 L8 2 L14 8 L8 13Z" fill="#fff" stroke="#bbb" stroke-width="1.1"></path><path d="M5 2 L7 4" stroke="#bbb" stroke-width="1.1"></path><rect x="0" y="13" width="13" height="2" fill="#e0e0e0"></rect></svg>
<div class="t" style="left: 850px; top: 288px; font-size: 12px; color: rgb(176, 176, 176); transform: scaleX(0.8806); transform-origin: left top;">Shape Fill</div>
<svg class="abs" style="left:899px;top:292px" width="7" height="5" viewBox="0 0 7 5"><path d="M1 1 L3.5 3.5 L6 1" fill="none" stroke="#bbb" stroke-width="1.1"></path></svg>
<svg class="abs" style="left:832px;top:308px" width="16" height="15" viewBox="0 0 16 15"><rect x="0.5" y="2.5" width="11" height="11" fill="none" stroke="#bbb" stroke-width="1.1"></rect><path d="M6 10 L14 2 L15.5 3.5 L7.5 11.5 L5.5 12Z" fill="#fff" stroke="#aaa" stroke-width="1"></path></svg>
<div class="t" style="left: 850px; top: 309px; font-size: 12px; color: rgb(176, 176, 176); transform: scaleX(0.9071); transform-origin: left top;">Shape Outline</div>
<svg class="abs" style="left:921px;top:313px" width="7" height="5" viewBox="0 0 7 5"><path d="M1 1 L3.5 3.5 L6 1" fill="none" stroke="#bbb" stroke-width="1.1"></path></svg>
<svg class="abs" style="left:832px;top:330px" width="16" height="15" viewBox="0 0 16 15"><path d="M1 9 L7 2 L15 5 L10 13 Z" fill="#e0e0e0" stroke="#bbb" stroke-width="1"></path><path d="M1 9 L10 13" stroke="#999" stroke-width="1"></path></svg>
<div class="t" style="left: 850px; top: 330px; font-size: 12px; color: rgb(176, 176, 176); transform: scaleX(0.8725); transform-origin: left top;">Shape Effects</div>
<svg class="abs" style="left:917px;top:335px" width="7" height="5" viewBox="0 0 7 5"><path d="M1 1 L3.5 3.5 L6 1" fill="none" stroke="#bbb" stroke-width="1.1"></path></svg>
<div class="t" style="left: 791px; top: 353px; font-size: 11px; color: rgb(51, 51, 51); transform: scaleX(0.9787); transform-origin: left top;">Drawing</div>
<svg class="abs" style="left:929px;top:355px" width="8" height="8" viewBox="0 0 8 8"><path d="M0.5 7.5 V0.5 H7.5" fill="none" stroke="#aaa" stroke-width="1"></path><path d="M3 3 L7 7 M4 7 H7 V4" fill="none" stroke="#aaa" stroke-width="1"></path></svg>
<div class="abs" style="left:941px;top:284px;width:1px;height:79px;background:#c6c6c6"></div>
<svg class="abs" style="left:950px;top:287px" width="12" height="12" viewBox="0 0 12 12"><circle cx="7" cy="5" r="3.8" fill="none" stroke="#2e6bc4" stroke-width="1.4"></circle><path d="M4.3 7.7 L1 11" stroke="#2e6bc4" stroke-width="1.6"></path></svg>
<div class="t" style="left:949px;top:306px;font-size:11px;color:#444">ab</div>
<svg class="abs" style="left:953px;top:328px" width="9" height="14" viewBox="0 0 9 14"><path d="M1 1 L1 12 L4 9 L6 13 L8 12 L6 8 L9 8Z" fill="#fff" stroke="#666" stroke-width="0.9"></path></svg>
<!-- THUMBNAIL PANE -->
<div class="abs" style="left:152px;top:367px;width:14px;height:513px;background:#f0f0f0"></div>
<div class="abs" style="left:168px;top:367px;width:1px;height:513px;background:#d4d4d4"></div>
<div class="abs" style="left:152px;top:369px;width:14px;height:14px;background:#fff;border:1px solid #8a8a8a"></div>
<svg class="abs" style="left:155px;top:373px" width="8" height="5" viewBox="0 0 8 5"><path d="M0 4.5 L4 0.5 L8 4.5Z" fill="#222"></path></svg>
<div class="abs" style="left:152px;top:442px;width:14px;height:142px;background:#fff;border:1px solid #8a8a8a"></div>
<div class="abs" style="left:152px;top:865px;width:14px;height:15px;background:#fff;border:1px solid #8a8a8a"></div>
<svg class="abs" style="left:155px;top:870px" width="8" height="5" viewBox="0 0 8 5"><path d="M0 0.5 L4 4.5 L8 0.5Z" fill="#222"></path></svg>
<div class="abs" style="left:0;top:367px;width:152px;height:513px;overflow:hidden"><div class="abs" style="left:0;top:-367px;width:152px;height:1023px">
<div class="abs" style="left:31px;top:352px;width:102px;height:71px;background:#f2f2f4;border:1px solid #b9b9b9;overflow:hidden"><svg class="abs" style="left:7px;top:18px" width="85" height="45" viewBox="0 0 85 45"><rect width="85" height="45" fill="#5e5056"></rect><rect x="27.5" y="6.8" width="4.4" height="1.8" fill="#4e4e58"></rect><rect x="8.0" y="26.2" width="5.6" height="2.3" fill="#6e5a5c"></rect><rect x="36.9" y="3.1" width="1.9" height="3.0" fill="#9a8884"></rect><rect x="10.5" y="10.0" width="4.3" height="4.8" fill="#9a8884"></rect><rect x="49.8" y="2.2" width="2.5" height="3.4" fill="#4a4248"></rect><rect x="24.6" y="6.5" width="2.0" height="2.6" fill="#2e2e36"></rect><rect x="15.4" y="26.2" width="4.4" height="2.8" fill="#4e4e58"></rect><rect x="60.5" y="25.4" width="4.3" height="3.2" fill="#4e4e58"></rect><rect x="36.3" y="14.1" width="4.1" height="3.1" fill="#3e3a40"></rect><rect x="21.1" y="8.1" width="5.0" height="1.8" fill="#3e3a40"></rect><rect x="44.6" y="39.4" width="4.8" height="2.5" fill="#6e5a5c"></rect><rect x="10.0" y="18.8" width="4.9" height="2.0" fill="#6a6068"></rect><rect x="35.8" y="43.3" width="1.8" height="3.5" fill="#8a7270"></rect><rect x="28.9" y="15.8" width="3.7" height="4.3" fill="#6e5a5c"></rect><rect x="71.4" y="42.5" width="3.6" height="3.8" fill="#5a4a4e"></rect><rect x="62.1" y="13.9" width="4.1" height="3.9" fill="#6a6068"></rect><rect x="24.2" y="17.4" width="4.5" height="1.6" fill="#6a6068"></rect><rect x="30.2" y="27.5" width="3.7" height="2.3" fill="#3e3a40"></rect><rect x="11.0" y="11.1" width="3.3" height="4.5" fill="#6e5a5c"></rect><rect x="14.1" y="18.1" width="2.8" height="2.0" fill="#5e5258"></rect><rect x="73.4" y="12.5" width="3.4" height="2.8" fill="#5e5258"></rect><rect x="81.4" y="6.8" width="2.3" height="2.3" fill="#7a6664"></rect><rect x="1.0" y="37.4" width="2.3" height="2.5" fill="#4a4248"></rect><rect x="35.6" y="16.6" width="4.0" height="4.8" fill="#7a5e60"></rect><rect x="73.0" y="42.8" width="4.4" height="4.1" fill="#6a6068"></rect><rect x="76.5" y="35.1" width="5.4" height="4.3" fill="#5e5258"></rect><rect x="33.8" y="17.7" width="3.7" height="2.9" fill="#7a6664"></rect><rect x="5.7" y="9.4" width="2.2" height="2.7" fill="#5a4a4e"></rect><rect x="8.7" y="25.5" width="3.9" height="4.8" fill="#9a8884"></rect><rect x="2.2" y="39.3" width="4.3" height="2.0" fill="#3e3a40"></rect><rect x="81.2" y="27.1" width="3.6" height="1.9" fill="#6a6068"></rect><rect x="84.4" y="21.0" width="3.7" height="1.8" fill="#6e5a5c"></rect><rect x="63.7" y="33.3" width="3.7" height="3.9" fill="#4e4e58"></rect><rect x="2.0" y="42.8" width="3.9" height="2.0" fill="#4e4e58"></rect><rect x="77.7" y="34.1" width="2.8" height="3.8" fill="#6e5a5c"></rect><rect x="59.2" y="11.8" width="3.2" height="2.1" fill="#7a6664"></rect><rect x="45.3" y="35.1" width="3.0" height="2.3" fill="#7a6664"></rect><rect x="68.5" y="36.8" width="4.8" height="2.3" fill="#4e4e58"></rect><rect x="41.9" y="32.9" width="6.0" height="4.3" fill="#6a6068"></rect><rect x="22.0" y="31.2" width="5.8" height="3.1" fill="#7a5e60"></rect><rect x="84.0" y="43.0" width="3.1" height="2.3" fill="#7a6664"></rect><rect x="40.0" y="15.2" width="3.7" height="4.9" fill="#9a8884"></rect><rect x="71.4" y="21.6" width="4.4" height="4.3" fill="#6e5a5c"></rect><rect x="70.9" y="5.4" width="3.2" height="4.0" fill="#7a6664"></rect><rect x="40.6" y="8.0" width="5.1" height="2.7" fill="#7a5e60"></rect><rect x="33.6" y="18.1" width="5.8" height="4.0" fill="#4a4248"></rect><rect x="84.4" y="1.2" width="4.2" height="3.1" fill="#2e2e36"></rect><rect x="12.4" y="37.2" width="5.9" height="3.8" fill="#8a7270"></rect><rect x="13.3" y="24.7" width="1.6" height="4.3" fill="#7a5e60"></rect><rect x="55.2" y="23.7" width="5.7" height="3.0" fill="#7a6664"></rect><rect x="70.2" y="9.5" width="2.6" height="2.5" fill="#7a6664"></rect><rect x="64.9" y="14.7" width="3.9" height="4.4" fill="#5a4a4e"></rect><rect x="77.4" y="15.9" width="3.6" height="3.5" fill="#4e4e58"></rect><rect x="35.8" y="41.3" width="3.8" height="3.4" fill="#4e4e58"></rect><rect x="43.4" y="39.3" width="5.0" height="3.6" fill="#4a4248"></rect><rect x="14.6" y="21.3" width="4.8" height="3.4" fill="#8a7270"></rect><rect x="58.0" y="23.9" width="3.7" height="4.2" fill="#4e4e58"></rect><rect x="4.8" y="8.6" width="1.7" height="1.8" fill="#6a6068"></rect><rect x="47.7" y="34.2" width="5.6" height="3.1" fill="#9a8884"></rect><rect x="82.7" y="27.3" width="2.4" height="2.5" fill="#4e4e58"></rect><rect x="45.3" y="21.5" width="5.7" height="3.9" fill="#3e3a40"></rect><rect x="78.4" y="40.2" width="2.4" height="3.1" fill="#5e5258"></rect><rect x="10.3" y="19.9" width="1.8" height="2.3" fill="#6e5a5c"></rect><rect x="18.1" y="13.6" width="2.1" height="4.2" fill="#7a5e60"></rect><rect x="54.7" y="16.5" width="2.6" height="2.0" fill="#6a6068"></rect><rect x="18.7" y="42.9" width="3.3" height="3.2" fill="#2e2e36"></rect><rect x="70.8" y="7.3" width="3.4" height="3.3" fill="#8a7270"></rect><rect x="35.8" y="16.0" width="1.9" height="2.8" fill="#8a7270"></rect><rect x="47.1" y="19.8" width="1.6" height="2.7" fill="#9a8884"></rect><rect x="25.1" y="43.2" width="2.0" height="4.7" fill="#7a6664"></rect><rect x="82.6" y="4.7" width="2.7" height="1.6" fill="#4a4248"></rect><rect x="23.0" y="5.8" width="3.4" height="4.7" fill="#3e3a40"></rect><rect x="34.5" y="24.1" width="3.8" height="3.2" fill="#8a7270"></rect><rect x="7.6" y="2.6" width="4.6" height="3.0" fill="#6e5a5c"></rect><rect x="22.9" y="0.8" width="1.9" height="2.4" fill="#9a8884"></rect><rect x="72.8" y="3.0" width="5.4" height="3.1" fill="#8a7270"></rect><rect x="84.5" y="18.8" width="5.6" height="3.7" fill="#5a4a4e"></rect><rect x="44.8" y="10.7" width="2.0" height="2.1" fill="#5a4a4e"></rect><rect x="15.4" y="42.0" width="4.3" height="3.4" fill="#7a6664"></rect><rect x="24.6" y="22.5" width="2.3" height="2.7" fill="#5a4a4e"></rect><rect x="84.5" y="1.7" width="1.6" height="3.3" fill="#7a6664"></rect><rect x="43.7" y="11.1" width="3.5" height="3.8" fill="#2e2e36"></rect><rect x="36.7" y="22.3" width="5.3" height="2.9" fill="#4e4e58"></rect><rect x="26.2" y="9.7" width="2.5" height="2.2" fill="#7a5e60"></rect><rect x="62.0" y="6.3" width="6.0" height="4.9" fill="#4a4248"></rect><rect x="1.2" y="28.1" width="5.5" height="3.0" fill="#5a4a4e"></rect><rect x="7.2" y="37.9" width="5.4" height="3.8" fill="#3e3a40"></rect><rect x="50.9" y="31.2" width="1.7" height="2.1" fill="#3e3a40"></rect><rect x="37.9" y="11.8" width="5.8" height="4.9" fill="#4e4e58"></rect><rect x="27.5" y="1.6" width="5.5" height="2.3" fill="#4a4248"></rect><rect x="0.1" y="17.2" width="3.6" height="3.3" fill="#7a6664"></rect><rect x="21.1" y="34.9" width="1.9" height="4.4" fill="#4a4248"></rect><rect x="34.0" y="1.9" width="1.6" height="2.6" fill="#7a6664"></rect><rect x="7.2" y="43.1" width="5.3" height="2.0" fill="#7a5e60"></rect><rect x="66.6" y="26.8" width="4.9" height="4.0" fill="#6a6068"></rect><rect x="12.7" y="32.6" width="4.4" height="1.7" fill="#7a5e60"></rect><rect x="75.8" y="28.2" width="4.8" height="4.3" fill="#4a4248"></rect><rect x="77.3" y="33.9" width="4.1" height="4.3" fill="#5a4a4e"></rect><rect x="70.2" y="26.3" width="5.5" height="3.9" fill="#7a5e60"></rect><rect x="54.6" y="3.8" width="1.7" height="3.7" fill="#6e5a5c"></rect><rect x="32.0" y="20.3" width="1.7" height="1.6" fill="#4e4e58"></rect><rect x="57.9" y="22.0" width="1.5" height="4.3" fill="#7a5e60"></rect><rect x="79.3" y="40.4" width="1.9" height="3.3" fill="#7a5e60"></rect><rect x="62.6" y="11.3" width="1.8" height="2.4" fill="#7a5e60"></rect><rect x="64.3" y="10.4" width="4.4" height="3.1" fill="#5e5258"></rect><rect x="6.5" y="41.0" width="2.8" height="1.7" fill="#2e2e36"></rect><rect x="54.6" y="3.5" width="2.2" height="2.4" fill="#7a5e60"></rect><rect x="58.9" y="28.0" width="2.1" height="3.2" fill="#6a6068"></rect><rect x="22.8" y="30.2" width="4.6" height="3.9" fill="#3e3a40"></rect><rect x="60.3" y="12.8" width="3.6" height="4.2" fill="#4e4e58"></rect><rect x="16.9" y="44.0" width="5.7" height="1.6" fill="#6a6068"></rect><rect x="6.5" y="22.8" width="6.0" height="5.0" fill="#5e5258"></rect><rect x="17.8" y="42.6" width="2.4" height="3.5" fill="#4a4248"></rect><rect x="63.5" y="11.8" width="3.1" height="3.6" fill="#2e2e36"></rect><rect x="43.2" y="39.9" width="4.7" height="2.3" fill="#6a6068"></rect><rect x="33.5" y="7.2" width="5.8" height="3.9" fill="#5e5258"></rect><rect x="25.7" y="6.3" width="3.0" height="2.6" fill="#8a7270"></rect><rect x="0.1" y="33.8" width="5.3" height="1.9" fill="#7a6664"></rect><rect x="60.6" y="40.6" width="2.8" height="2.8" fill="#5e5258"></rect><rect x="33.2" y="39.1" width="1.8" height="4.7" fill="#3e3a40"></rect><rect x="72.6" y="12.6" width="1.7" height="3.8" fill="#2e2e36"></rect><rect x="79.5" y="11.2" width="2.7" height="3.3" fill="#7a6664"></rect><rect x="65.7" y="35.3" width="3.4" height="1.6" fill="#2e2e36"></rect><rect x="34.0" y="39.4" width="4.0" height="2.2" fill="#6e5a5c"></rect><rect x="4.2" y="33.0" width="3.5" height="4.1" fill="#2e2e36"></rect><rect x="73.9" y="21.9" width="5.6" height="3.4" fill="#4a4248"></rect><rect x="40.1" y="15.5" width="2.8" height="4.1" fill="#2e2e36"></rect><rect x="22.1" y="29.5" width="2.9" height="3.5" fill="#5e5258"></rect><rect x="10.2" y="28.9" width="1.8" height="3.3" fill="#6a6068"></rect><rect x="46.8" y="20.4" width="3.0" height="4.2" fill="#5e5258"></rect><rect x="11.9" y="8.7" width="1.9" height="2.7" fill="#6e5a5c"></rect><rect x="27.1" y="16.6" width="5.1" height="2.2" fill="#5a4a4e"></rect><rect x="63.7" y="18.6" width="3.4" height="3.3" fill="#5e5258"></rect><rect x="23.0" y="33.8" width="3.7" height="3.5" fill="#8a7270"></rect><rect x="10.7" y="22.7" width="4.3" height="4.5" fill="#7a6664"></rect><rect x="7.9" y="40.4" width="3.2" height="3.8" fill="#5e5258"></rect><rect x="81.1" y="38.2" width="5.4" height="1.6" fill="#5a4a4e"></rect><rect x="36.1" y="34.4" width="5.1" height="4.9" fill="#6a6068"></rect><rect x="0.0" y="17.6" width="5.7" height="4.4" fill="#6a6068"></rect><rect x="82.6" y="11.2" width="2.0" height="2.0" fill="#4e4e58"></rect><rect x="82.6" y="4.9" width="5.2" height="4.0" fill="#6a6068"></rect><rect x="7.2" y="35.0" width="1.5" height="1.9" fill="#9a8884"></rect><rect x="78.2" y="29.0" width="2.9" height="1.9" fill="#3e3a40"></rect><rect x="44.9" y="19.7" width="4.9" height="1.8" fill="#3e3a40"></rect><rect x="44.6" y="26.2" width="3.2" height="2.3" fill="#9a8884"></rect><rect x="0.1" y="24.2" width="6.0" height="2.5" fill="#8a7270"></rect><rect x="54.8" y="39.8" width="3.6" height="2.3" fill="#7a6664"></rect><rect x="2.5" y="18.5" width="4.4" height="1.7" fill="#7a6664"></rect><rect x="42.4" y="30.4" width="3.4" height="2.4" fill="#2e2e36"></rect><rect x="36.1" y="16.7" width="3.7" height="3.9" fill="#7a5e60"></rect><rect x="35.7" y="30.7" width="2.4" height="4.3" fill="#7a5e60"></rect><rect x="71.8" y="3.0" width="3.7" height="2.2" fill="#7a6664"></rect><rect x="19.6" y="10.0" width="4.9" height="2.5" fill="#9a8884"></rect><rect x="42.1" y="8.4" width="2.5" height="3.0" fill="#2e2e36"></rect><rect x="4.8" y="26.8" width="5.6" height="1.7" fill="#5a4a4e"></rect><rect x="82.8" y="6.4" width="1.7" height="1.7" fill="#5e5258"></rect><rect x="38.2" y="32.0" width="2.9" height="1.9" fill="#6e5a5c"></rect><rect x="79.2" y="14.8" width="2.3" height="4.8" fill="#7a5e60"></rect><rect x="39.7" y="14.0" width="4.8" height="4.4" fill="#8a7270"></rect><rect x="37.6" y="4.9" width="1.9" height="1.8" fill="#5e5258"></rect><rect x="81.2" y="5.6" width="5.8" height="2.2" fill="#8a7270"></rect><rect x="65.3" y="13.9" width="5.1" height="1.8" fill="#7a5e60"></rect><rect x="40.2" y="16.8" width="5.6" height="2.2" fill="#8a7270"></rect><rect x="62.7" y="21.4" width="4.3" height="2.4" fill="#2e2e36"></rect><rect x="65.2" y="1.8" width="1.7" height="1.7" fill="#5a4a4e"></rect><rect x="21.8" y="33.6" width="5.5" height="2.7" fill="#3e3a40"></rect><rect x="28.5" y="42.9" width="1.7" height="4.1" fill="#7a5e60"></rect><rect x="26.9" y="12.4" width="1.5" height="4.1" fill="#2e2e36"></rect><rect x="80.5" y="2.9" width="5.2" height="1.9" fill="#7a5e60"></rect><rect x="81.3" y="42.9" width="3.2" height="2.4" fill="#5e5258"></rect><rect x="69.3" y="6.0" width="3.7" height="1.5" fill="#7a5e60"></rect><rect x="25.8" y="31.1" width="2.2" height="2.3" fill="#8a7270"></rect><rect x="39.2" y="35.3" width="4.2" height="3.3" fill="#5e5258"></rect><rect x="64.0" y="11.1" width="1.8" height="1.6" fill="#4e4e58"></rect><rect x="46.3" y="7.2" width="3.4" height="1.9" fill="#6e5a5c"></rect><rect x="22.5" y="3.8" width="1.9" height="3.2" fill="#7a5e60"></rect><rect x="82.6" y="7.8" width="2.1" height="3.1" fill="#2e2e36"></rect><rect x="20.0" y="24.2" width="5.0" height="4.2" fill="#3e3a40"></rect><rect x="25.0" y="25.5" width="3.2" height="4.1" fill="#7a6664"></rect><rect x="37.3" y="8.4" width="2.6" height="2.5" fill="#9a8884"></rect><rect x="16.0" y="2.9" width="2.6" height="2.4" fill="#4e4e58"></rect><rect x="19.7" y="36.4" width="4.4" height="5.0" fill="#6e5a5c"></rect><rect x="0.4" y="39.7" width="2.5" height="3.1" fill="#8a7270"></rect><rect x="3.4" y="13.2" width="2.0" height="2.2" fill="#9a8884"></rect><rect x="16.5" y="3.4" width="3.8" height="2.1" fill="#9a8884"></rect><rect x="22.1" y="35.0" width="5.8" height="1.9" fill="#9a8884"></rect><rect x="60.3" y="15.7" width="1.7" height="2.7" fill="#5a4a4e"></rect><rect x="17.3" y="11.5" width="4.2" height="3.8" fill="#7a6664"></rect><rect x="69.3" y="36.8" width="3.3" height="2.8" fill="#9a8884"></rect><rect x="26.5" y="9.2" width="5.1" height="3.4" fill="#6e5a5c"></rect><rect x="34.7" y="35.8" width="4.5" height="2.0" fill="#4e4e58"></rect><rect x="7.7" y="7.4" width="4.6" height="2.9" fill="#3e3a40"></rect><rect x="56.8" y="18.8" width="1.7" height="4.1" fill="#8a7270"></rect><rect x="35.2" y="0.8" width="4.9" height="4.3" fill="#2e2e36"></rect><rect x="16.8" y="32.8" width="2.4" height="1.5" fill="#4a4248"></rect><rect x="36.0" y="36.9" width="3.3" height="4.6" fill="#6a6068"></rect><rect x="65.7" y="5.8" width="1.7" height="2.0" fill="#5e5258"></rect><rect x="7.6" y="28.0" width="3.2" height="3.3" fill="#4a4248"></rect><rect x="29.6" y="7.3" width="2.3" height="1.7" fill="#5e5258"></rect><rect x="41.7" y="36.2" width="5.9" height="2.2" fill="#4a4248"></rect><rect x="71.2" y="2.0" width="5.6" height="2.6" fill="#9a8884"></rect><rect x="78.7" y="17.5" width="5.6" height="3.7" fill="#4a4248"></rect><rect x="54.4" y="38.5" width="4.3" height="3.7" fill="#7a6664"></rect><rect x="70.5" y="8.2" width="2.5" height="2.9" fill="#4e4e58"></rect><rect x="13.3" y="16.2" width="2.2" height="4.9" fill="#7a6664"></rect><rect x="3.5" y="25.3" width="4.9" height="1.6" fill="#8a7270"></rect><rect x="10.0" y="27.0" width="4.0" height="3.7" fill="#3e3a40"></rect><rect x="55.2" y="13.9" width="2.6" height="2.9" fill="#8a7270"></rect><rect x="38.0" y="19.7" width="1.6" height="3.7" fill="#6a6068"></rect><rect x="39.5" y="20.1" width="4.3" height="4.4" fill="#4a4248"></rect><rect x="68.9" y="18.0" width="1.8" height="2.8" fill="#8a7270"></rect><rect x="7.8" y="19.9" width="3.8" height="1.6" fill="#2e2e36"></rect><rect x="11.1" y="41.5" width="2.9" height="4.0" fill="#6e5a5c"></rect><rect x="4.6" y="22.7" width="3.2" height="4.8" fill="#4a4248"></rect><rect x="2.2" y="3.0" width="4.3" height="3.9" fill="#6e5a5c"></rect><rect x="16.5" y="44.2" width="3.7" height="4.8" fill="#4a4248"></rect><rect x="58.3" y="32.4" width="2.5" height="4.4" fill="#9a8884"></rect><rect x="64.3" y="7.1" width="5.5" height="2.5" fill="#6a6068"></rect><rect x="12.2" y="22.6" width="5.6" height="2.2" fill="#3e3a40"></rect><rect x="52.3" y="10.7" width="3.2" height="2.2" fill="#5e5258"></rect><rect x="13.7" y="42.1" width="4.6" height="4.6" fill="#4a4248"></rect><rect x="67.3" y="11.9" width="5.0" height="1.7" fill="#8a7270"></rect><rect x="82.1" y="20.4" width="3.8" height="3.9" fill="#6e5a5c"></rect><rect x="21.4" y="24.1" width="5.4" height="4.1" fill="#8a7270"></rect><rect x="22.5" y="44.6" width="4.1" height="2.8" fill="#6e5a5c"></rect><rect x="37.6" y="8.0" width="4.8" height="1.7" fill="#4e4e58"></rect><rect x="21.6" y="28.8" width="5.9" height="3.6" fill="#2e2e36"></rect><rect x="76.1" y="33.0" width="4.9" height="2.3" fill="#3e3a40"></rect><rect x="52.4" y="19.5" width="3.8" height="4.6" fill="#4a4248"></rect><rect x="41.5" y="27.6" width="1.7" height="1.7" fill="#9a8884"></rect><rect x="30.2" y="4.8" width="3.1" height="2.3" fill="#9a8884"></rect><rect x="25.6" y="6.0" width="3.1" height="4.4" fill="#4a4248"></rect><rect x="11.5" y="42.1" width="2.6" height="2.0" fill="#6e5a5c"></rect><rect x="5.4" y="6.5" width="4.5" height="2.4" fill="#3e3a40"></rect><rect x="82.2" y="2.5" width="5.2" height="4.6" fill="#9a8884"></rect><rect x="54.9" y="20.0" width="5.7" height="4.1" fill="#7a6664"></rect><rect x="14.0" y="0.0" width="1.8" height="1.6" fill="#4a4248"></rect><rect x="20.2" y="2.6" width="5.0" height="1.5" fill="#4e4e58"></rect><rect x="55.8" y="8.9" width="3.4" height="3.3" fill="#2e2e36"></rect><rect x="43.1" y="28.9" width="5.2" height="2.1" fill="#3e3a40"></rect><rect x="5.4" y="28.2" width="6.0" height="4.0" fill="#6a6068"></rect><rect x="60.8" y="0.3" width="5.3" height="4.1" fill="#6a6068"></rect><rect x="6.8" y="29.5" width="2.3" height="5.0" fill="#3e3a40"></rect><rect x="19.7" y="1.7" width="3.0" height="4.1" fill="#7a5e60"></rect><rect x="80.1" y="11.8" width="1.7" height="3.7" fill="#2e2e36"></rect><rect x="37.1" y="35.5" width="3.9" height="2.4" fill="#2e2e36"></rect><rect x="78.9" y="40.2" width="1.9" height="3.3" fill="#4a4248"></rect><rect x="22.1" y="10.6" width="4.8" height="4.8" fill="#7a5e60"></rect><rect x="77.8" y="8.6" width="3.2" height="3.6" fill="#5e5258"></rect><rect x="77.1" y="28.4" width="4.6" height="3.8" fill="#4e4e58"></rect><rect x="39.9" y="37.8" width="4.6" height="4.5" fill="#5e5258"></rect><rect x="81.2" y="10.5" width="5.5" height="4.3" fill="#5e5258"></rect><rect x="52.9" y="3.5" width="5.6" height="2.0" fill="#5a4a4e"></rect><rect x="9.5" y="28.0" width="2.2" height="4.9" fill="#7a5e60"></rect><rect x="2.4" y="1.9" width="4.6" height="3.7" fill="#7a5e60"></rect><rect x="5.8" y="2.1" width="5.4" height="4.2" fill="#7a6664"></rect><rect x="69.5" y="36.9" width="5.5" height="1.7" fill="#7a5e60"></rect><rect x="80.3" y="4.8" width="2.4" height="1.9" fill="#5a4a4e"></rect><rect x="80.7" y="41.0" width="4.9" height="1.8" fill="#2e2e36"></rect><rect x="53.7" y="21.5" width="2.1" height="4.3" fill="#2e2e36"></rect><path d="M0 12 L40 30 L85 38 M10 0 L35 45 M30 0 L48 45 M0 30 L45 18 L70 0 M55 45 L70 20" stroke="#3a4450" stroke-width="2.2" fill="none" opacity="0.8"></path><path d="M45 0 L60 45" stroke="#8a6a6a" stroke-width="2" opacity="0.6"></path><circle cx="45" cy="23" r="2.5" fill="#f08030"></circle><circle cx="62" cy="22" r="2" fill="#e86030" opacity="0.6"></circle><rect x="57.5" y="6" width="24" height="15" fill="#fbf6f4" stroke="#b04040" stroke-width="0.6"></rect><rect x="60" y="8.5" width="18" height="1" fill="#555"></rect><rect x="60" y="11" width="18" height="1" fill="#555"></rect><rect x="64" y="14" width="10" height="1" fill="#555"></rect><rect x="60" y="17" width="18" height="1" fill="#c06060"></rect></svg><div class="abs" style="right:2px;bottom:2px;width:5px;height:5px;background:#4a6fa8"></div></div>
<div class="abs" style="left:0;top:366px;width:152px;height:1px;background:#e6e6e6"></div>
<svg class="abs" style="left:7px;top:369px" width="10" height="9" viewBox="0 0 10 9"><path d="M5 0 L6.2 3.3 L9.8 3.4 L7 5.6 L8 9 L5 7 L2 9 L3 5.6 L0.2 3.4 L3.8 3.3Z" fill="#555"></path></svg>
<div class="abs" style="left:31px;top:441px;width:101px;height:71px;background:linear-gradient(170deg,#fafafa,#ececef);border:1px solid #b9b9b9;overflow:hidden"><svg class="abs" style="left:0;top:0" width="101" height="14" viewBox="0 0 101 14"><rect width="101" height="12" fill="#5b95d2"></rect><path d="M0 0 L6 0 L0 5Z" fill="#e8f2fa"></path><path d="M8 12 L20 0 L24 0 L12 12Z" fill="#2a5a98"></path><path d="M14 0 L22 0 L22 12 L14 12Z" fill="#2d60a4" opacity="0.7"></path><path d="M24 0 L32 0 L38 12 L30 12Z" fill="#9cc8ee"></path><path d="M0 10 L10 0 L11 0 L1 11Z" fill="#1a3a60"></path><path d="M33 0 L101 0 L101 12 L39 12Z" fill="#2f8ae6"></path><rect x="42" y="12" width="59" height="1.5" fill="#2a4e80" opacity="0.5"></rect><rect x="66" y="2" width="32" height="1.8" fill="#e8f4ff" opacity="0.85"></rect><rect x="48" y="6" width="50" height="1" fill="#cfe6ff" opacity="0.6"></rect><rect x="51" y="8.5" width="47" height="1" fill="#cfe6ff" opacity="0.6"></rect></svg><div class="abs" style="left:4px;top:20px;width:22px;height:1px;background:#9aa"></div><div class="abs" style="left:3px;top:26px;width:22px;height:1px;background:#e06060"></div><div class="abs" style="left:5px;top:29.0px;width:14px;height:0.8px;background:#b0b0b0"></div><div class="abs" style="left:5px;top:31.4px;width:18px;height:0.8px;background:#b0b0b0"></div><div class="abs" style="left:5px;top:33.8px;width:22px;height:0.8px;background:#b0b0b0"></div><div class="abs" style="left:5px;top:36.2px;width:14px;height:0.8px;background:#b0b0b0"></div><div class="abs" style="left:5px;top:38.6px;width:18px;height:0.8px;background:#b0b0b0"></div><div class="abs" style="left:5px;top:41.0px;width:22px;height:0.8px;background:#b0b0b0"></div><div class="abs" style="left:5px;top:43.4px;width:14px;height:0.8px;background:#b0b0b0"></div><div class="abs" style="left:5px;top:45.8px;width:18px;height:0.8px;background:#b0b0b0"></div><div class="abs" style="left:5px;top:48.2px;width:22px;height:0.8px;background:#b0b0b0"></div><div class="abs" style="left:5px;top:50.599999999999994px;width:14px;height:0.8px;background:#b0b0b0"></div><div class="abs" style="left:5px;top:53.0px;width:18px;height:0.8px;background:#b0b0b0"></div><div class="abs" style="left:5px;top:55.4px;width:22px;height:0.8px;background:#b0b0b0"></div><div class="abs" style="left:5px;top:57.8px;width:14px;height:0.8px;background:#b0b0b0"></div><div class="abs" style="left:5px;top:60.2px;width:18px;height:0.8px;background:#b0b0b0"></div><div class="abs" style="left:5px;top:62.6px;width:22px;height:0.8px;background:#b0b0b0"></div><div class="abs" style="left:5px;top:65.0px;width:14px;height:0.8px;background:#b0b0b0"></div><div class="abs" style="left:5px;top:67.4px;width:18px;height:0.8px;background:#b0b0b0"></div><div class="abs" style="left:5px;top:69.8px;width:22px;height:0.8px;background:#b0b0b0"></div><div class="abs" style="left:33px;top:29.0px;width:18px;height:0.8px;background:#bbb"></div><div class="abs" style="left:33px;top:31.4px;width:22px;height:0.8px;background:#bbb"></div><div class="abs" style="left:33px;top:33.8px;width:18px;height:0.8px;background:#bbb"></div><div class="abs" style="left:33px;top:36.2px;width:22px;height:0.8px;background:#bbb"></div><div class="abs" style="left:64px;top:26px;width:18px;height:1px;background:#e06060"></div><div class="abs" style="left:64px;top:29.0px;width:26px;height:0.8px;background:#b0b0b0"></div><div class="abs" style="left:64px;top:31.4px;width:20px;height:0.8px;background:#b0b0b0"></div><div class="abs" style="right:2px;bottom:2px;width:5px;height:5px;background:#4a6fa8"></div></div>
<svg class="abs" style="left:7px;top:438px" width="12" height="14" viewBox="0 0 12 14"><path d="M1 1 L11 13" stroke="#555" stroke-width="0.9"></path></svg>
<div class="t" style="left:8px;top:439px;font-size:13px;color:#444">4</div>
<svg class="abs" style="left:7px;top:457px" width="10" height="9" viewBox="0 0 10 9"><path d="M5 0 L6.2 3.3 L9.8 3.4 L7 5.6 L8 9 L5 7 L2 9 L3 5.6 L0.2 3.4 L3.8 3.3Z" fill="#555"></path></svg>
<div class="abs" style="left:27px;top:528px;width:110px;height:79px;background:#a52a1d"></div>
<div class="abs" style="left:30px;top:531px;width:104px;height:73px;background:#fff"></div>
<div class="abs" style="left:31px;top:531px;width:102px;height:72px;background:linear-gradient(170deg,#fafafa,#ececef);border:none;overflow:hidden"><svg class="abs" style="left:0;top:0" width="101" height="14" viewBox="0 0 101 14"><rect width="101" height="12" fill="#5b95d2"></rect><path d="M0 0 L6 0 L0 5Z" fill="#e8f2fa"></path><path d="M8 12 L20 0 L24 0 L12 12Z" fill="#2a5a98"></path><path d="M14 0 L22 0 L22 12 L14 12Z" fill="#2d60a4" opacity="0.7"></path><path d="M24 0 L32 0 L38 12 L30 12Z" fill="#9cc8ee"></path><path d="M0 10 L10 0 L11 0 L1 11Z" fill="#1a3a60"></path><path d="M33 0 L101 0 L101 12 L39 12Z" fill="#2f8ae6"></path><rect x="42" y="12" width="59" height="1.5" fill="#2a4e80" opacity="0.5"></rect><rect x="66" y="2" width="32" height="1.8" fill="#e8f4ff" opacity="0.85"></rect><rect x="48" y="6" width="50" height="1" fill="#cfe6ff" opacity="0.6"></rect><rect x="51" y="8.5" width="47" height="1" fill="#cfe6ff" opacity="0.6"></rect></svg><div class="abs" style="left:4px;top:15px;width:30px;height:2px;background:#1a2566"></div><div class="abs" style="left:4px;top:21px;width:80px;height:1px;background:#8a8a98"></div><div class="abs" style="left:4px;top:24.5px;width:44px;height:1px;background:#8a8a98"></div><div class="abs" style="left:4px;top:30px;width:85px;height:8px;background:#4e7fc1"></div><div class="abs" style="left:4px;top:38.5px;width:85px;height:6.5px;background:#d0d6ea"></div><div class="abs" style="left:4px;top:45px;width:85px;height:7px;background:#e9ebf5"></div><div class="abs" style="left:4px;top:52px;width:85px;height:7px;background:#d0d6ea"></div><div class="abs" style="left:5px;top:32px;width:40px;height:1px;background:#5a607a"></div><div class="abs" style="left:5px;top:40.5px;width:43px;height:1px;background:#5a607a"></div><div class="abs" style="left:5px;top:47px;width:44px;height:1px;background:#5a607a"></div><div class="abs" style="left:5px;top:54px;width:10px;height:1px;background:#5a607a"></div><div class="abs" style="left:80px;top:54px;width:8px;height:1.2px;background:#e02020"></div><div class="abs" style="left:66px;top:30px;width:0.8px;height:29px;background:#fff;opacity:0.8"></div><div class="abs" style="right:2px;bottom:2px;width:5px;height:5px;background:#4a6fa8"></div></div>
<div class="t" style="left:9px;top:529px;font-size:13px;color:#c0392b">5</div>
<svg class="abs" style="left:7px;top:547px" width="10" height="9" viewBox="0 0 10 9"><path d="M5 0 L6.2 3.3 L9.8 3.4 L7 5.6 L8 9 L5 7 L2 9 L3 5.6 L0.2 3.4 L3.8 3.3Z" fill="#555"></path></svg>
<div class="abs" style="left:31px;top:621px;width:101px;height:71px;background:linear-gradient(170deg,#fafafa,#ececef);border:1px solid #b9b9b9;overflow:hidden"><svg class="abs" style="left:0;top:0" width="101" height="14" viewBox="0 0 101 14"><rect width="101" height="12" fill="#5b95d2"></rect><path d="M0 0 L6 0 L0 5Z" fill="#e8f2fa"></path><path d="M8 12 L20 0 L24 0 L12 12Z" fill="#2a5a98"></path><path d="M14 0 L22 0 L22 12 L14 12Z" fill="#2d60a4" opacity="0.7"></path><path d="M24 0 L32 0 L38 12 L30 12Z" fill="#9cc8ee"></path><path d="M0 10 L10 0 L11 0 L1 11Z" fill="#1a3a60"></path><path d="M33 0 L101 0 L101 12 L39 12Z" fill="#2f8ae6"></path><rect x="42" y="12" width="59" height="1.5" fill="#2a4e80" opacity="0.5"></rect><rect x="66" y="2" width="32" height="1.8" fill="#e8f4ff" opacity="0.85"></rect><rect x="48" y="6" width="50" height="1" fill="#cfe6ff" opacity="0.6"></rect><rect x="51" y="8.5" width="47" height="1" fill="#cfe6ff" opacity="0.6"></rect></svg><div class="abs" style="left:3px;top:13px;width:42px;height:2px;background:#3a3a4a"></div><div class="abs" style="left:3px;top:17px;width:96px;height:5px;background:#f5ec2a"></div><div class="abs" style="left:3px;top:23px;width:96px;height:0.6px;background:#cfcfcf"></div><div class="abs" style="left:3px;top:28px;width:96px;height:0.6px;background:#cfcfcf"></div><div class="abs" style="left:3px;top:33px;width:96px;height:0.6px;background:#cfcfcf"></div><div class="abs" style="left:3px;top:38px;width:96px;height:0.6px;background:#cfcfcf"></div><div class="abs" style="left:3px;top:43px;width:96px;height:0.6px;background:#cfcfcf"></div><div class="abs" style="left:3px;top:48px;width:96px;height:0.6px;background:#cfcfcf"></div><div class="abs" style="left:3px;top:53px;width:96px;height:0.6px;background:#cfcfcf"></div><div class="abs" style="left:3px;top:58px;width:96px;height:0.6px;background:#cfcfcf"></div><div class="abs" style="left:3px;top:63px;width:96px;height:0.6px;background:#cfcfcf"></div><div class="abs" style="left:17px;top:17px;width:0.6px;height:47px;background:#8a8a8a"></div><div class="abs" style="left:44px;top:17px;width:0.6px;height:47px;background:#8a8a8a"></div><div class="abs" style="left:52px;top:17px;width:0.6px;height:47px;background:#8a8a8a"></div><div class="abs" style="left:66px;top:17px;width:0.6px;height:47px;background:#8a8a8a"></div><div class="abs" style="left:72px;top:17px;width:0.6px;height:47px;background:#8a8a8a"></div><div class="abs" style="left:80px;top:17px;width:0.6px;height:47px;background:#8a8a8a"></div><div class="abs" style="left:88px;top:17px;width:0.6px;height:47px;background:#8a8a8a"></div><div class="abs" style="right:2px;bottom:2px;width:5px;height:5px;background:#4a6fa8"></div></div>
<div class="t" style="left:8px;top:620px;font-size:13px;color:#444">6</div>
<svg class="abs" style="left:7px;top:637px" width="10" height="9" viewBox="0 0 10 9"><path d="M5 0 L6.2 3.3 L9.8 3.4 L7 5.6 L8 9 L5 7 L2 9 L3 5.6 L0.2 3.4 L3.8 3.3Z" fill="#555"></path></svg>
<div class="abs" style="left:31px;top:711px;width:101px;height:71px;background:linear-gradient(170deg,#fafafa,#ececef);border:1px solid #b9b9b9;overflow:hidden"><svg class="abs" style="left:0;top:0" width="101" height="14" viewBox="0 0 101 14"><rect width="101" height="12" fill="#5b95d2"></rect><path d="M0 0 L6 0 L0 5Z" fill="#e8f2fa"></path><path d="M8 12 L20 0 L24 0 L12 12Z" fill="#2a5a98"></path><path d="M14 0 L22 0 L22 12 L14 12Z" fill="#2d60a4" opacity="0.7"></path><path d="M24 0 L32 0 L38 12 L30 12Z" fill="#9cc8ee"></path><path d="M0 10 L10 0 L11 0 L1 11Z" fill="#1a3a60"></path><path d="M33 0 L101 0 L101 12 L39 12Z" fill="#2f8ae6"></path><rect x="42" y="12" width="59" height="1.5" fill="#2a4e80" opacity="0.5"></rect><rect x="66" y="2" width="32" height="1.8" fill="#e8f4ff" opacity="0.85"></rect><rect x="48" y="6" width="50" height="1" fill="#cfe6ff" opacity="0.6"></rect><rect x="51" y="8.5" width="47" height="1" fill="#cfe6ff" opacity="0.6"></rect></svg><div class="abs" style="left:3px;top:13px;width:42px;height:2px;background:#3a3a4a"></div><div class="abs" style="left:3px;top:17px;width:96px;height:5px;background:#f5ec2a"></div><div class="abs" style="left:3px;top:23px;width:96px;height:0.6px;background:#cfcfcf"></div><div class="abs" style="left:3px;top:28px;width:96px;height:0.6px;background:#cfcfcf"></div><div class="abs" style="left:3px;top:33px;width:96px;height:0.6px;background:#cfcfcf"></div><div class="abs" style="left:3px;top:38px;width:96px;height:0.6px;background:#cfcfcf"></div><div class="abs" style="left:3px;top:43px;width:96px;height:0.6px;background:#cfcfcf"></div><div class="abs" style="left:3px;top:48px;width:96px;height:0.6px;background:#cfcfcf"></div><div class="abs" style="left:3px;top:53px;width:96px;height:0.6px;background:#cfcfcf"></div><div class="abs" style="left:3px;top:58px;width:96px;height:0.6px;background:#cfcfcf"></div><div class="abs" style="left:3px;top:63px;width:96px;height:0.6px;background:#cfcfcf"></div><div class="abs" style="left:17px;top:17px;width:0.6px;height:47px;background:#8a8a8a"></div><div class="abs" style="left:44px;top:17px;width:0.6px;height:47px;background:#8a8a8a"></div><div class="abs" style="left:52px;top:17px;width:0.6px;height:47px;background:#8a8a8a"></div><div class="abs" style="left:66px;top:17px;width:0.6px;height:47px;background:#8a8a8a"></div><div class="abs" style="left:72px;top:17px;width:0.6px;height:47px;background:#8a8a8a"></div><div class="abs" style="left:80px;top:17px;width:0.6px;height:47px;background:#8a8a8a"></div><div class="abs" style="left:88px;top:17px;width:0.6px;height:47px;background:#8a8a8a"></div><div class="abs" style="right:2px;bottom:2px;width:5px;height:5px;background:#4a6fa8"></div></div>
<div class="t" style="left:8px;top:709px;font-size:13px;color:#444">7</div>
<svg class="abs" style="left:7px;top:727px" width="10" height="9" viewBox="0 0 10 9"><path d="M5 0 L6.2 3.3 L9.8 3.4 L7 5.6 L8 9 L5 7 L2 9 L3 5.6 L0.2 3.4 L3.8 3.3Z" fill="#555"></path></svg>
<div class="abs" style="left:31px;top:801px;width:101px;height:71px;background:linear-gradient(170deg,#fafafa,#ececef);border:1px solid #b9b9b9;overflow:hidden"><svg class="abs" style="left:0;top:0" width="101" height="14" viewBox="0 0 101 14"><rect width="101" height="12" fill="#5b95d2"></rect><path d="M0 0 L6 0 L0 5Z" fill="#e8f2fa"></path><path d="M8 12 L20 0 L24 0 L12 12Z" fill="#2a5a98"></path><path d="M14 0 L22 0 L22 12 L14 12Z" fill="#2d60a4" opacity="0.7"></path><path d="M24 0 L32 0 L38 12 L30 12Z" fill="#9cc8ee"></path><path d="M0 10 L10 0 L11 0 L1 11Z" fill="#1a3a60"></path><path d="M33 0 L101 0 L101 12 L39 12Z" fill="#2f8ae6"></path><rect x="42" y="12" width="59" height="1.5" fill="#2a4e80" opacity="0.5"></rect><rect x="66" y="2" width="32" height="1.8" fill="#e8f4ff" opacity="0.85"></rect><rect x="48" y="6" width="50" height="1" fill="#cfe6ff" opacity="0.6"></rect><rect x="51" y="8.5" width="47" height="1" fill="#cfe6ff" opacity="0.6"></rect></svg><div class="abs" style="left:5px;top:16px;width:60px;height:52px;background:#fff"></div><div class="abs" style="left:9px;top:47px;width:38px;height:19px;background:#22d12a"></div><div class="abs" style="left:26px;top:40px;width:10px;height:6px;background:#111"></div><div class="abs" style="left:30px;top:20px;width:30px;height:24px;border:1px solid #888;transform:skewX(-20deg)"></div><div class="abs" style="left:73px;top:15px;width:26px;height:42px;background:linear-gradient(180deg,#6a6560,#8a8580 45%,#c8c4c0 50%,#d8d4d0)"></div><div class="abs" style="left:60px;top:58px;width:38px;height:3px;background:#3aa040"></div><div class="abs" style="right:2px;bottom:2px;width:5px;height:5px;background:#4a6fa8"></div></div>
<div class="t" style="left:8px;top:799px;font-size:13px;color:#444">8</div>
<svg class="abs" style="left:7px;top:817px" width="10" height="9" viewBox="0 0 10 9"><path d="M5 0 L6.2 3.3 L9.8 3.4 L7 5.6 L8 9 L5 7 L2 9 L3 5.6 L0.2 3.4 L3.8 3.3Z" fill="#555"></path></svg>
</div></div>
<!-- cursor -->
<svg class="abs" style="left:108px;top:559px" width="13" height="21" viewBox="0 0 13 21"><path d="M1 1 L1 16 L4.5 12.5 L7.5 19.5 L10 18.5 L7 11.5 L12 11.5Z" fill="#fff" stroke="#111" stroke-width="1"></path></svg>
<!-- MAIN SLIDE -->
<div class="abs" style="left:396px;top:385px;width:642px;height:445px;border:1px solid #c8c8c8;background:linear-gradient(205deg,#fcfcfd 0%,#f6f6f8 35%,#ebebee 70%,#dedee2 100%);overflow:hidden">
  <svg class="abs" style="left:0;top:0" width="640" height="443" viewBox="0 0 640 443">
    <defs>
      <linearGradient id="bl" x1="0" y1="0" x2="0" y2="1"><stop offset="0" stop-color="#3899ee"></stop><stop offset="1" stop-color="#2784de"></stop></linearGradient>
      <linearGradient id="gl" x1="0" y1="0" x2="1" y2="1"><stop offset="0" stop-color="#7fb6e8"></stop><stop offset="0.5" stop-color="#3f86cf"></stop><stop offset="1" stop-color="#9cc7ee"></stop></linearGradient>
      <linearGradient id="fade" x1="0" y1="0" x2="1" y2="0"><stop offset="0" stop-color="#fff" stop-opacity="0"></stop><stop offset="1" stop-color="#fff" stop-opacity="0.9"></stop></linearGradient>
    </defs>
    <!-- faint building reflections in body -->
    <path d="M250 75 L640 200 L640 230 L200 85Z" fill="#ffffff" opacity="0.35"></path>
    <path d="M0 230 L300 443 L250 443 L0 270Z" fill="#ffffff" opacity="0.18"></path>
    <path d="M380 75 L640 110 L640 125 L360 85Z" fill="#ffffff" opacity="0.4"></path>
    <!-- header building -->
    <defs>
      <linearGradient id="lg1" x1="0" y1="0" x2="1" y2="1"><stop offset="0" stop-color="#a9d2f2"></stop><stop offset="0.5" stop-color="#7db6e6"></stop><stop offset="1" stop-color="#9ccaf0"></stop></linearGradient>
      <linearGradient id="pil" x1="0" y1="0" x2="1" y2="0"><stop offset="0" stop-color="#3d86d6"></stop><stop offset="0.3" stop-color="#5aa2e6"></stop><stop offset="0.55" stop-color="#3f88d8"></stop><stop offset="0.8" stop-color="#6ab2ee"></stop><stop offset="1" stop-color="#4a92de"></stop></linearGradient>
      <linearGradient id="wg" x1="0" y1="0" x2="1" y2="0"><stop offset="0" stop-color="#cfe6f8"></stop><stop offset="0.5" stop-color="#f4f9fd"></stop><stop offset="1" stop-color="#ffffff"></stop></linearGradient>
    </defs>
    <rect x="0" y="0" width="250" height="74" fill="url(#lg1)"></rect>
    <path d="M0 0 L27 0 L0 46Z" fill="#eef3f8"></path>
    <path d="M27 0 L0 46 L0 50 L30 0Z" fill="#4a7fc0"></path>
    <path d="M0 60 L56 0 L60 0 L0 66Z" fill="#3a70b4" opacity="0.8"></path>
    <path d="M19 37 L45 2 L47.5 3 L21.5 38Z" fill="#1a3050"></path>
    <path d="M28.5 74 L84 15 L86.5 17 L32 74Z" fill="#152a48"></path>
    <path d="M0 72 L40 30 L42 31 L2 74Z" fill="#3f72b0"></path>
    <path d="M20 34 L23 34 L25 74 L22 74Z" fill="#1f3a60"></path>
    <path d="M10 74 L60 20 L61 21 L12 74Z" fill="#5a90cc"></path>
    <path d="M40 74 L85 35 L85 37 L43 74Z" fill="#4a7ec0"></path>
    <path d="M60 0 L62 0 L62 74 L60 74Z" fill="#4f86c6"></path>
    <path d="M75 0 L77 0 L77 74 L75 74Z" fill="#4f86c6"></path>
    <path d="M0 20 L35 0 L38 0 L0 23Z" fill="#c8e2f6"></path>
    <rect x="85" y="0" width="7" height="74" fill="#3a7ac6"></rect>
    <rect x="85" y="0" width="1.5" height="74" fill="#1d4a88"></rect>
    <rect x="91" y="0" width="61" height="74" fill="#2656a0"></rect>
    <path d="M91 20 H152 M91 42 H152 M91 62 H152 M112 0 V74 M132 0 V74" stroke="#4070b4" stroke-width="1"></path>
    <path d="M91 60 L150 10" stroke="#5a88c8" stroke-width="1"></path>
    <path d="M91 4 L100 0 L175 74 L160 74Z" fill="#6aa4e0"></path>
    <path d="M91 4 L94 3 L165 74 L160 74Z" fill="#a8d0f2"></path>
    <rect x="152" y="0" width="36" height="74" fill="url(#pil)"></rect>
    <path d="M160 0 L161 0 L164 74 L163 74Z M172 0 L173 0 L176 74 L175 74Z" fill="#2f6cb8"></path>
    <path d="M85 26 L91 26 L91 34 L85 34Z" fill="#0f1a2a"></path>
    <path d="M98 16 L104 10 L109 15 L103 21Z" fill="#0f1a2a"></path>
    <path d="M147 67 L157 57 L162 62 L152 72Z" fill="#0c1420"></path>
    <path d="M163 50 L172 42 L176 47 L167 56Z" fill="#0c1420"></path>
    <path d="M173 38 L186 30 L190 37 L178 46Z" fill="#0c1420"></path>
    <path d="M183 74 L195 64 L205 70 L201 74Z" fill="#0c1420"></path>
    <path d="M187 0 L212 0 L246.6 74 L200 74Z" fill="url(#wg)"></path>
    <path d="M190 0 L226 74 M196 0 L234 74 M202 0 L238 74 M185 8 L215 74" stroke="#5a78a0" stroke-width="0.8" fill="none"></path>
    <path d="M188 0 L218 74" stroke="#8fb8e0" stroke-width="2" fill="none"></path>
    <!-- blue band -->
    <path d="M212 0 L640 0 L640 74 L246.6 74Z" fill="url(#bl)"></path>
    <path d="M252 74 L640 74 L640 79 L258 79Z" fill="#1c3f6e" opacity="0.45"></path>
    <path d="M250 74 L640 74 L640 76 L252 76Z" fill="#163766" opacity="0.6"></path>
  </svg>
  <div class="t" style="left:375px;top:10px;font-size:16.5px;font-weight:700;color:#fff;letter-spacing:4.3px">PROGRES PEKERJAAN</div>
  <div class="t" style="left: 235px; top: 34px; font-size: 13px; font-weight: 700; color: rgb(255, 255, 255); transform: scaleX(0.8076); transform-origin: left top;">PENGAWASAN RENOVASI INTERIOR DAN FASILITAS PERKANTO</div>
  <div class="t" style="left: 254px; top: 48px; font-size: 13px; font-weight: 700; color: rgb(255, 255, 255); transform: scaleX(0.8652); transform-origin: left top;">Gedung Ditjen EBTKE, Gedung Slamet Bratana Lantai 6, J</div>
  <div class="t" style="left: 20.5px; top: 90px; font-size: 17px; font-weight: 700; color: rgb(23, 34, 106); transform: scaleX(0.9815); transform-origin: left top;">PROGRES PEKERJAAN</div>
  <div class="t" style="left: 20.5px; top: 127px; font-size: 15.5px; color: rgb(30, 44, 94); transform: scaleX(1.1197); transform-origin: left top;"><span class="sq">Dalam</span> <span class="sq">Minggu</span> Ke – 5 <span class="sq">Periode</span> <span class="sq">Tanggal</span> 29 Juli s/d 04 <span class="sq">Agustus</span> 2024</div>
  <div class="t" style="left: 20.5px; top: 148px; font-size: 15.5px; color: rgb(30, 44, 94); transform: scaleX(1.1279); transform-origin: left top;"><span class="sq">Progres</span> <span class="sq">Pekerjaan</span> <span class="sq">sebagai</span> <span class="sq">berikut</span> :</div>
  <!-- table -->
  <div class="abs" style="left:25px;top:182px;width:532px;height:54px;background:#4e7fc1"></div>
  <div class="abs" style="left:25px;top:238px;width:532px;height:42px;background:#d0d6ea"></div>
  <div class="abs" style="left:25px;top:280px;width:532px;height:45px;background:#e9ebf5"></div>
  <div class="abs" style="left:25px;top:325px;width:532px;height:44px;background:#d0d6ea"></div>
  <div class="abs" style="left:410px;top:182px;width:1.5px;height:187px;background:#fff;opacity:0.85"></div>
  <div class="abs" style="left:428.5px;top:182px;width:1.5px;height:187px;background:#fff;opacity:0.85"></div>
  <div class="t" style="left: 31px; top: 186px; font-size: 15.5px; font-weight: 700; color: rgb(14, 31, 91); transform: scaleX(1.0879); transform-origin: left top;"><span class="sq">Kemajuan</span> <span class="sq">Pekerjaan</span> <span class="sq">Minggu</span> <span class="sq">Ini</span></div>
  <div class="t" style="left: 31px; top: 243px; font-size: 15.5px; font-weight: 700; color: rgb(14, 31, 91); transform: scaleX(1.0659); transform-origin: left top;"><span class="sq">Realisasi</span> <span class="sq">Pekerjaan</span> s/d <span class="sq">Minggu</span> <span class="sq">Ini</span></div>
  <div class="t" style="left: 31px; top: 287px; font-size: 15.5px; font-weight: 700; color: rgb(14, 31, 91); transform: scaleX(1.1009); transform-origin: left top;"><span class="sq">Rencana</span> <span class="sq">Pekerjaan</span> s/d <span class="sq">Minggu</span> <span class="sq">Ini</span></div>
  <div class="t" style="left: 31px; top: 331px; font-size: 15.5px; font-weight: 700; color: rgb(14, 31, 91); transform: scaleX(1.0498); transform-origin: left top;"><span class="sq">Deviasi</span></div>
  <div class="t" style="left:417px;top:186px;font-size:15px;font-weight:700;color:#0e1f5b">:</div>
  <div class="t" style="left:417px;top:243px;font-size:15px;font-weight:700;color:#0e1f5b">:</div>
  <div class="t" style="left:417px;top:287px;font-size:15px;font-weight:700;color:#0e1f5b">:</div>
  <div class="t" style="left:417px;top:331px;font-size:15px;font-weight:700;color:#0e1f5b">:</div>
  <div class="t" style="right: 89px; top: 186px; font-size: 15.5px; font-weight: 700; color: rgb(14, 31, 91); transform: scaleX(1.0466); transform-origin: right top;">3,21%</div>
  <div class="t" style="right: 89px; top: 243px; font-size: 15.5px; font-weight: 700; color: rgb(14, 31, 91); transform: scaleX(1.0461); transform-origin: right top;">10,71%</div>
  <div class="t" style="right: 89px; top: 287px; font-size: 15.5px; font-weight: 700; color: rgb(14, 31, 91); transform: scaleX(1.0466); transform-origin: right top;">6,89%</div>
  <div class="t" style="right: 89px; top: 331px; font-size: 15.5px; font-weight: 700; color: rgb(224, 22, 28); transform: scaleX(1.0466); transform-origin: right top;">3,82%</div>
  <div class="abs" style="left:606px;top:408px;width:34px;height:35px;background:#2f5c9e;color:#fff;font-weight:700;font-size:14px;line-height:35px;text-align:center">4</div>
</div>
<!-- right scrollbar -->
<div class="abs" style="left:1263px;top:367px;width:14px;height:478px;background:#f0f0f0"></div>
<div class="abs" style="left:1263px;top:783px;width:14px;height:14px;background:#fff;border:1px solid #8a8a8a"></div>
<svg class="abs" style="left:1266px;top:788px" width="8" height="5" viewBox="0 0 8 5"><path d="M0 0.5 L4 4.5 L8 0.5Z" fill="#222"></path></svg>
<svg class="abs" style="left:1265px;top:801px" width="10" height="11" viewBox="0 0 10 11"><path d="M5 0 L10 5 L0 5Z M5 4 L10 9 L0 9Z" fill="#666"></path><rect x="2.5" y="7" width="5" height="4" fill="#666"></rect></svg>
<svg class="abs" style="left:1265px;top:816px" width="10" height="11" viewBox="0 0 10 11"><path d="M5 11 L10 6 L0 6Z M5 7 L10 2 L0 2Z" fill="#666"></path><rect x="2.5" y="0" width="5" height="4" fill="#666"></rect></svg>
<!-- notes -->
<div class="abs" style="left:172px;top:849px;width:1105px;height:2px;background:#d2d2d2"></div>
<div class="t" style="left: 181px; top: 858px; font-size: 14px; color: rgb(106, 106, 106); transform: scaleX(0.9883); transform-origin: left top;">Click to add notes</div>
<!-- STATUS BAR -->
<div class="abs" style="left:0;top:881px;width:1277px;height:21px;background:#f3f3f3;border-top:1px solid #dadada"></div>
<div class="t" style="left: 9.4px; top: 886px; font-size: 11px; color: rgb(68, 68, 68); transform: scaleX(0.9647); transform-origin: left top;">Slide 5 of 19</div>
<svg class="abs" style="left:85px;top:883px" width="15" height="16" viewBox="0 0 15 16"><path d="M1 2 Q4 1 7 3 Q10 1 14 2 V14 Q10 13 7 15 Q4 13 1 14Z" fill="none" stroke="#777" stroke-width="1"></path><path d="M7 3 V15" stroke="#777" stroke-width="1"></path><path d="M9.5 5 L13 9 M13 5 L9.5 9" stroke="#777" stroke-width="1"></path></svg>
<div class="t" style="left: 115.5px; top: 886px; font-size: 11px; color: rgb(68, 68, 68); transform: scaleX(0.96); transform-origin: left top;">English (United States)</div>
<svg class="abs" style="left:238px;top:884px" width="16" height="15" viewBox="0 0 16 15"><path d="M12 4 A6 6 0 1 0 9 13" fill="none" stroke="#666" stroke-width="1.2"></path><path d="M7 5 L14 14 M14 7 L8 14" stroke="#333" stroke-width="1.4"></path></svg>
<div class="t" style="left: 257.5px; top: 886px; font-size: 11px; font-weight: 700; color: rgb(68, 68, 68); transform: scaleX(0.8939); transform-origin: left top;">Accessibility: Investigate</div>
<svg class="abs" style="left:796px;top:884px" width="12" height="14" viewBox="0 0 12 14"><path d="M6 0.5 L9 3.5 H3Z" fill="#666"></path><path d="M1 6 H11 M1 9 H11 M1 12 H11" stroke="#666" stroke-width="1"></path></svg>
<div class="t" style="left: 811px; top: 886px; font-size: 11px; color: rgb(68, 68, 68); transform: scaleX(0.9739); transform-origin: left top;">Notes</div>
<svg class="abs" style="left:858px;top:884px" width="14" height="14" viewBox="0 0 14 14"><path d="M0.5 0.5 H13.5 V10 H6 L3 13 V10 H0.5Z" fill="#666"></path></svg>
<div class="t" style="left: 874.5px; top: 886px; font-size: 11px; color: rgb(68, 68, 68); transform: scaleX(0.9401); transform-origin: left top;">Comments</div>
<div class="abs" style="left:942px;top:882px;width:38px;height:20px;background:#cfcfcf"></div>
<svg class="abs" style="left:953px;top:884px" width="16" height="14" viewBox="0 0 16 14"><rect x="0.5" y="0.5" width="15" height="12" fill="none" stroke="#888" stroke-width="1"></rect><rect x="3" y="3" width="10" height="5" fill="none" stroke="#888" stroke-width="1"></rect><path d="M3 10 H13" stroke="#888" stroke-width="1"></path></svg>
<svg class="abs" style="left:991px;top:884px" width="15" height="14" viewBox="0 0 15 14"><rect x="0.5" y="0.5" width="5" height="5" fill="none" stroke="#777" stroke-width="1"></rect><rect x="9" y="0.5" width="5" height="5" fill="none" stroke="#777" stroke-width="1"></rect><rect x="0.5" y="8" width="5" height="5" fill="none" stroke="#777" stroke-width="1"></rect><rect x="9" y="8" width="5" height="5" fill="none" stroke="#777" stroke-width="1"></rect></svg>
<svg class="abs" style="left:1029px;top:884px" width="13" height="14" viewBox="0 0 13 14"><path d="M0.5 1.5 L6.5 2.5 L12.5 1.5 V12.5 L6.5 13.5 L0.5 12.5Z M6.5 2.5 V13.5" fill="none" stroke="#777" stroke-width="1"></path><path d="M2 5 H5 M2 8 H5 M8 5 H11 M8 8 H11" stroke="#777" stroke-width="0.8"></path></svg>
<svg class="abs" style="left:1066px;top:884px" width="14" height="14" viewBox="0 0 14 14"><path d="M0.5 1 H13.5" stroke="#777" stroke-width="1.2"></path><rect x="1.5" y="2" width="11" height="6" fill="none" stroke="#777" stroke-width="1"></rect><path d="M7 8 V12 M4 13 H10" stroke="#777" stroke-width="1"></path></svg>
<div class="abs" style="left:1098px;top:891px;width:8px;height:1px;background:#555"></div>
<div class="abs" style="left:1110px;top:891px;width:94px;height:1px;background:#777"></div>
<div class="abs" style="left:1157px;top:888px;width:1px;height:7px;background:#555"></div>
<div class="abs" style="left:1138px;top:886px;width:5px;height:11px;background:#555"></div>
<div class="abs" style="left:1208.5px;top:891px;width:8px;height:1px;background:#555"></div>
<div class="abs" style="left:1212px;top:887.5px;width:1px;height:8px;background:#555"></div>
<div class="t" style="left: 1228px; top: 886px; font-size: 11px; color: rgb(68, 68, 68); transform: scaleX(0.8851); transform-origin: left top;">66%</div>
<svg class="abs" style="left:1259px;top:884px" width="14" height="14" viewBox="0 0 14 14"><rect x="0.5" y="0.5" width="13" height="13" fill="none" stroke="#777" stroke-width="1"></rect><path d="M7 2 V5 M7 9 V12 M2 7 H5 M9 7 H12" stroke="#555" stroke-width="1"></path></svg>
<!-- pencil annotation button -->
<div class="abs" style="left:19px;top:876px;width:31px;height:31px;border-radius:50%;background:#262626"></div>
<svg class="abs" style="left:25px;top:882px" width="19" height="19" viewBox="0 0 19 19"><path d="M3 13 L12 4 L15 7 L6 16 L3 16Z" fill="none" stroke="#23c26a" stroke-width="1.4" stroke-linejoin="round"></path><path d="M10.5 5.5 L13.5 8.5" stroke="#23c26a" stroke-width="1.2"></path><path d="M2 18 H16" stroke="#23c26a" stroke-width="1.4"></path></svg>
<!-- PARTICIPANTS PANEL -->
<div id="panel" class="abs">
  <svg class="abs" style="left:8px;top:6px" width="16" height="16" viewBox="0 0 16 16"><circle cx="8" cy="8" r="8" fill="#0b5cff"></circle><text x="8" y="10.6" text-anchor="middle" font-family="Liberation Sans" font-weight="700" font-size="7.5" fill="#fff">zm</text></svg>
  <div class="t" style="left:29px;top:9px;font-size:12px;color:#1a1a1a">Participants (11)</div>
  <div class="abs" style="left:201px;top:14px;width:11px;height:1px;background:#111"></div>
  <div class="abs" style="left:246px;top:9px;width:11px;height:11px;border:1px solid #111"></div>
  <svg class="abs" style="left:291px;top:9px" width="12" height="12" viewBox="0 0 12 12"><path d="M1 1 L11 11 M11 1 L1 11" stroke="#111" stroke-width="1.1"></path></svg>
  <div class="abs" style="left:18px;top:40px;width:286px;height:32px;border:1px solid #c3c3c8;border-radius:7px"></div>
  <svg class="abs" style="left:30px;top:50px" width="14" height="14" viewBox="0 0 14 14"><circle cx="5.8" cy="5.8" r="4.6" stroke="#777" stroke-width="1.2" fill="none"></circle><path d="M9.2 9.2 L12.6 12.6" stroke="#777" stroke-width="1.3"></path></svg>
  <div class="t" style="left:46px;top:49px;font-size:13px;color:#6b6b70">Find a participant</div>
  <div class="abs av" style="top:80px"><svg width="26" height="26" viewBox="0 0 26 26"><rect width="26" height="26" fill="#0c1226"></rect><path d="M4 20 L6 8 L9 12 L11 3 L13 9 L15 2 L17 10 L20 6 L22 20Z" fill="#243a80"></path><path d="M9 20 L11 10 L13 14 L15 8 L17 20Z" fill="#4a68b8"></path><circle cx="13" cy="6" r="2" fill="#8aa0e0" opacity="0.6"></circle><rect x="3" y="19" width="20" height="1.6" fill="#b8b8c4" opacity="0.7"></rect><rect x="0" y="22" width="26" height="4" fill="#1a1520"></rect></svg></div>
  <div class="t nm" style="top:88px">dinda aprilia (Me)</div>
  <svg class="abs" style="left:287px;top:85px" width="16" height="16" viewBox="0 0 16 16"><path d="M6 2.5 Q6 1 8 1 Q10 1 10 2.5 L10 8 Q10 9.8 8 9.8 Q6 9.8 6 8Z" stroke="#9a9a9a" stroke-width="1.1" fill="none"></path><path d="M4 7 Q4 12 8 12 Q12 12 12 7 M8 12 L8 15 M5.5 15 L10.5 15" stroke="#9a9a9a" stroke-width="1.1" fill="none"></path></svg>
  <div class="abs av" style="top:121px;background:#fdf1e7"></div>
  <div class="t nm" style="top:129px">ppbmn - reka fadhila (Host)</div>
  <svg class="abs" style="left:241px;top:126px" width="16" height="16" viewBox="0 0 16 16"><circle cx="8" cy="8" r="6" stroke="#999" stroke-width="1" fill="none"></circle><circle cx="8" cy="8" r="2.4" fill="#e02828"></circle></svg>
  <svg class="abs" style="left:264px;top:126px" width="16" height="16" viewBox="0 0 16 16"><path d="M6 2.5 Q6 1 8 1 Q10 1 10 2.5 L10 8 Q10 9.8 8 9.8 Q6 9.8 6 8Z" stroke="#d9534f" stroke-width="1.1" fill="none"></path><path d="M4 7 Q4 12 8 12 Q12 12 12 7 M8 12 L8 15 M5.5 15 L10.5 15" stroke="#d9534f" stroke-width="1.1" fill="none"></path><path d="M2 15.5 L15 1" stroke="#d9534f" stroke-width="1.2"></path></svg>
  <svg class="abs" style="left:288px;top:126px" width="18" height="16" viewBox="0 0 18 16"><path d="M1.5 4 L12 4 L12 13 L1.5 13 Z" stroke="#d9534f" stroke-width="1.1" fill="none" stroke-linejoin="round"></path><path d="M12 7 L16.5 4.5 L16.5 12.5 L12 10" stroke="#d9534f" stroke-width="1.1" fill="none"></path><path d="M1 15 L16.5 1.5" stroke="#d9534f" stroke-width="1.2"></path></svg>
  <div class="abs av" style="top:162px;background:#f19a1f">CD</div>
  <div class="t nm" style="top:170px">concept design architect</div>
  <div class="abs" style="left:240px;top:170px;width:16px;height:11px;background:#12a03a;border-radius:2px"></div><svg class="abs" style="left:240px;top:170px" width="16" height="11" viewBox="0 0 16 11"><path d="M8 2 L11 5.3 L9 5.3 L9 9 L7 9 L7 5.3 L5 5.3Z" fill="#fff"></path></svg>
  <svg class="abs" style="left:266px;top:167px" width="16" height="16" viewBox="0 0 16 16"><path d="M6 2.5 Q6 1 8 1 Q10 1 10 2.5 L10 8 Q10 9.8 8 9.8 Q6 9.8 6 8Z" stroke="#9a9a9a" stroke-width="1.1" fill="none"></path><path d="M4 7 Q4 12 8 12 Q12 12 12 7 M8 12 L8 15 M5.5 15 L10.5 15" stroke="#9a9a9a" stroke-width="1.1" fill="none"></path></svg>
  <svg class="abs" style="left:288px;top:167px" width="18" height="16" viewBox="0 0 18 16"><path d="M1.5 4 L12 4 L12 13 L1.5 13 Z" stroke="#d9534f" stroke-width="1.1" fill="none" stroke-linejoin="round"></path><path d="M12 7 L16.5 4.5 L16.5 12.5 L12 10" stroke="#d9534f" stroke-width="1.1" fill="none"></path><path d="M1 15 L16.5 1.5" stroke="#d9534f" stroke-width="1.2"></path></svg>
  <div class="abs av" style="top:203px"><svg width="26" height="26" viewBox="0 0 26 26"><rect width="26" height="26" fill="#0b4d5e"></rect><rect y="14" width="26" height="12" fill="#0e6070"></rect><circle cx="13" cy="11" r="8" fill="#eef0ea"></circle><path d="M6 26 L7 14 L9 12 L11 14 L11 26Z" fill="#e8884a"></path><path d="M11 26 L11 17 L14 16 L14 26Z" fill="#5ac0c8"></path><path d="M14 26 L14 19 L17 18 L18 26Z" fill="#3aa8b0"></path><path d="M18 26 L18 21 L21 19 L24 21 L24 26Z" fill="#d87040"></path><path d="M0 26 L0 21 L4 20 L6 26Z" fill="#48b0b8"></path></svg></div>
  <div class="t nm" style="top:211px">PPBMN_aprie (Co-host)</div>
  <svg class="abs" style="left:264px;top:208px" width="16" height="16" viewBox="0 0 16 16"><path d="M6 2.5 Q6 1 8 1 Q10 1 10 2.5 L10 8 Q10 9.8 8 9.8 Q6 9.8 6 8Z" stroke="#d9534f" stroke-width="1.1" fill="none"></path><path d="M4 7 Q4 12 8 12 Q12 12 12 7 M8 12 L8 15 M5.5 15 L10.5 15" stroke="#d9534f" stroke-width="1.1" fill="none"></path><path d="M2 15.5 L15 1" stroke="#d9534f" stroke-width="1.2"></path></svg>
  <svg class="abs" style="left:288px;top:208px" width="18" height="16" viewBox="0 0 18 16"><path d="M1.5 4 L12 4 L12 13 L1.5 13 Z" stroke="#d9534f" stroke-width="1.1" fill="none" stroke-linejoin="round"></path><path d="M12 7 L16.5 4.5 L16.5 12.5 L12 10" stroke="#d9534f" stroke-width="1.1" fill="none"></path><path d="M1 15 L16.5 1.5" stroke="#d9534f" stroke-width="1.2"></path></svg>
  <div class="abs av" style="top:244px"><svg width="26" height="26" viewBox="0 0 26 26"><rect width="26" height="26" fill="#e8ecf2"></rect><rect width="26" height="8" fill="#86aee0"></rect><rect y="8" width="26" height="10" fill="#f4f6f8"></rect><path d="M2 11 H24 M2 14 H24" stroke="#606a78" stroke-width="1.2" stroke-dasharray="2 1"></path><rect y="18" width="26" height="3" fill="#9aa2ae"></rect><path d="M2 19.5 H24" stroke="#40485a" stroke-width="1" stroke-dasharray="2 1.5"></path><rect y="21" width="26" height="5" fill="#c8ccd4"></rect></svg></div>
  <div class="t nm" style="top:252px">concept design architect</div>
  <svg class="abs" style="left:264px;top:249px" width="16" height="16" viewBox="0 0 16 16"><path d="M6 2.5 Q6 1 8 1 Q10 1 10 2.5 L10 8 Q10 9.8 8 9.8 Q6 9.8 6 8Z" stroke="#d9534f" stroke-width="1.1" fill="none"></path><path d="M4 7 Q4 12 8 12 Q12 12 12 7 M8 12 L8 15 M5.5 15 L10.5 15" stroke="#d9534f" stroke-width="1.1" fill="none"></path><path d="M2 15.5 L15 1" stroke="#d9534f" stroke-width="1.2"></path></svg>
  <svg class="abs" style="left:288px;top:249px" width="18" height="16" viewBox="0 0 18 16"><path d="M1.5 4 L12 4 L12 13 L1.5 13 Z" stroke="#d9534f" stroke-width="1.1" fill="none" stroke-linejoin="round"></path><path d="M12 7 L16.5 4.5 L16.5 12.5 L12 10" stroke="#d9534f" stroke-width="1.1" fill="none"></path><path d="M1 15 L16.5 1.5" stroke="#d9534f" stroke-width="1.2"></path></svg>
  <div class="abs av" style="top:285px"><svg width="26" height="26" viewBox="0 0 26 26"><rect width="26" height="26" fill="#3e3e30"></rect><rect y="0" width="26" height="9" fill="#2a2e24"></rect><rect y="15" width="26" height="11" fill="#c0d8c4"></rect><rect y="18" width="26" height="8" fill="#e0ece2"></rect><circle cx="13" cy="9" r="2" fill="#3a2a20"></circle><path d="M10 12 Q13 10 16 12 L16 20 L14 20 L14 25 L12 25 L12 20 L10 20Z" fill="#1e1e1e"></path></svg></div>
  <div class="t nm" style="top:293px">harits</div>
  <svg class="abs" style="left:264px;top:290px" width="16" height="16" viewBox="0 0 16 16"><path d="M6 2.5 Q6 1 8 1 Q10 1 10 2.5 L10 8 Q10 9.8 8 9.8 Q6 9.8 6 8Z" stroke="#d9534f" stroke-width="1.1" fill="none"></path><path d="M4 7 Q4 12 8 12 Q12 12 12 7 M8 12 L8 15 M5.5 15 L10.5 15" stroke="#d9534f" stroke-width="1.1" fill="none"></path><path d="M2 15.5 L15 1" stroke="#d9534f" stroke-width="1.2"></path></svg>
  <svg class="abs" style="left:288px;top:290px" width="18" height="16" viewBox="0 0 18 16"><path d="M1.5 4 L12 4 L12 13 L1.5 13 Z" stroke="#8a8a8a" stroke-width="1.1" fill="none" stroke-linejoin="round"></path><path d="M12 7 L16.5 4.5 L16.5 12.5 L12 10" stroke="#8a8a8a" stroke-width="1.1" fill="none"></path></svg>
  <div class="abs av" style="top:326px"><svg width="26" height="26" viewBox="0 0 26 26"><rect width="26" height="26" fill="#06122a"></rect><circle cx="13" cy="13" r="8" fill="none" stroke="#2a7ad8" stroke-width="2.5"></circle><path d="M17 9 A6 6 0 1 0 18 16" fill="none" stroke="#8ad0ff" stroke-width="1.6"></path><rect x="13" y="11" width="9" height="2" fill="#5ab0f0"></rect><rect x="0" y="18" width="26" height="2" fill="#0a2a5a" opacity="0.8"></rect></svg></div>
  <div class="t nm" style="top:334px">Mochamad Yusuf Kurniawan</div>
  <svg class="abs" style="left:264px;top:331px" width="16" height="16" viewBox="0 0 16 16"><path d="M6 2.5 Q6 1 8 1 Q10 1 10 2.5 L10 8 Q10 9.8 8 9.8 Q6 9.8 6 8Z" stroke="#d9534f" stroke-width="1.1" fill="none"></path><path d="M4 7 Q4 12 8 12 Q12 12 12 7 M8 12 L8 15 M5.5 15 L10.5 15" stroke="#d9534f" stroke-width="1.1" fill="none"></path><path d="M2 15.5 L15 1" stroke="#d9534f" stroke-width="1.2"></path></svg>
  <svg class="abs" style="left:288px;top:331px" width="18" height="16" viewBox="0 0 18 16"><path d="M1.5 4 L12 4 L12 13 L1.5 13 Z" stroke="#d9534f" stroke-width="1.1" fill="none" stroke-linejoin="round"></path><path d="M12 7 L16.5 4.5 L16.5 12.5 L12 10" stroke="#d9534f" stroke-width="1.1" fill="none"></path><path d="M1 15 L16.5 1.5" stroke="#d9534f" stroke-width="1.2"></path></svg>
  <div class="abs av" style="top:367px;background:#1d9a7f">PJ</div>
  <div class="t nm" style="top:375px">PT.Syapril Janizar | Dinda</div>
  <svg class="abs" style="left:264px;top:372px" width="16" height="16" viewBox="0 0 16 16"><path d="M6 2.5 Q6 1 8 1 Q10 1 10 2.5 L10 8 Q10 9.8 8 9.8 Q6 9.8 6 8Z" stroke="#d9534f" stroke-width="1.1" fill="none"></path><path d="M4 7 Q4 12 8 12 Q12 12 12 7 M8 12 L8 15 M5.5 15 L10.5 15" stroke="#d9534f" stroke-width="1.1" fill="none"></path><path d="M2 15.5 L15 1" stroke="#d9534f" stroke-width="1.2"></path></svg>
  <svg class="abs" style="left:288px;top:372px" width="18" height="16" viewBox="0 0 18 16"><path d="M1.5 4 L12 4 L12 13 L1.5 13 Z" stroke="#d9534f" stroke-width="1.1" fill="none" stroke-linejoin="round"></path><path d="M12 7 L16.5 4.5 L16.5 12.5 L12 10" stroke="#d9534f" stroke-width="1.1" fill="none"></path><path d="M1 15 L16.5 1.5" stroke="#d9534f" stroke-width="1.2"></path></svg>
  <div class="abs av" style="top:408px;background:#8e44ad">S|</div>
  <div class="t nm" style="top:416px">SJP | Roby S K</div>
  <svg class="abs" style="left:264px;top:413px" width="16" height="16" viewBox="0 0 16 16"><path d="M6 2.5 Q6 1 8 1 Q10 1 10 2.5 L10 8 Q10 9.8 8 9.8 Q6 9.8 6 8Z" stroke="#d9534f" stroke-width="1.1" fill="none"></path><path d="M4 7 Q4 12 8 12 Q12 12 12 7 M8 12 L8 15 M5.5 15 L10.5 15" stroke="#d9534f" stroke-width="1.1" fill="none"></path><path d="M2 15.5 L15 1" stroke="#d9534f" stroke-width="1.2"></path></svg>
  <svg class="abs" style="left:288px;top:413px" width="18" height="16" viewBox="0 0 18 16"><path d="M1.5 4 L12 4 L12 13 L1.5 13 Z" stroke="#d9534f" stroke-width="1.1" fill="none" stroke-linejoin="round"></path><path d="M12 7 L16.5 4.5 L16.5 12.5 L12 10" stroke="#d9534f" stroke-width="1.1" fill="none"></path><path d="M1 15 L16.5 1.5" stroke="#d9534f" stroke-width="1.2"></path></svg>
  <div class="abs av" style="top:449px;background:#23a563">SG</div>
  <div class="t nm" style="top:457px">supardi gultom</div>
  <svg class="abs" style="left:264px;top:454px" width="16" height="16" viewBox="0 0 16 16"><path d="M6 2.5 Q6 1 8 1 Q10 1 10 2.5 L10 8 Q10 9.8 8 9.8 Q6 9.8 6 8Z" stroke="#d9534f" stroke-width="1.1" fill="none"></path><path d="M4 7 Q4 12 8 12 Q12 12 12 7 M8 12 L8 15 M5.5 15 L10.5 15" stroke="#d9534f" stroke-width="1.1" fill="none"></path><path d="M2 15.5 L15 1" stroke="#d9534f" stroke-width="1.2"></path></svg>
  <svg class="abs" style="left:288px;top:454px" width="18" height="16" viewBox="0 0 18 16"><path d="M1.5 4 L12 4 L12 13 L1.5 13 Z" stroke="#d9534f" stroke-width="1.1" fill="none" stroke-linejoin="round"></path><path d="M12 7 L16.5 4.5 L16.5 12.5 L12 10" stroke="#d9534f" stroke-width="1.1" fill="none"></path><path d="M1 15 L16.5 1.5" stroke="#d9534f" stroke-width="1.2"></path></svg>
  <div class="abs av" style="top:490px;background:#1c9a7e">T</div>
  <div class="t nm" style="top:498px">Tiara</div>
  <svg class="abs" style="left:264px;top:495px" width="16" height="16" viewBox="0 0 16 16"><path d="M6 2.5 Q6 1 8 1 Q10 1 10 2.5 L10 8 Q10 9.8 8 9.8 Q6 9.8 6 8Z" stroke="#d9534f" stroke-width="1.1" fill="none"></path><path d="M4 7 Q4 12 8 12 Q12 12 12 7 M8 12 L8 15 M5.5 15 L10.5 15" stroke="#d9534f" stroke-width="1.1" fill="none"></path><path d="M2 15.5 L15 1" stroke="#d9534f" stroke-width="1.2"></path></svg>
  <svg class="abs" style="left:288px;top:495px" width="18" height="16" viewBox="0 0 18 16"><path d="M1.5 4 L12 4 L12 13 L1.5 13 Z" stroke="#d9534f" stroke-width="1.1" fill="none" stroke-linejoin="round"></path><path d="M12 7 L16.5 4.5 L16.5 12.5 L12 10" stroke="#d9534f" stroke-width="1.1" fill="none"></path><path d="M1 15 L16.5 1.5" stroke="#d9534f" stroke-width="1.2"></path></svg>
  <div class="abs btn" style="left:5px;top:576px;width:52px;height:23px">Invite</div>
  <div class="abs btn" style="left:62px;top:576px;width:75px;height:23px">Mute me</div>
  <div class="abs btn" style="left:141px;top:576px;width:177px;height:23px">Merge to meeting window</div>
</div>
<!-- ZOOM TOOLBAR -->
<div id="band" class="abs"></div>
<div id="ztool" class="abs"></div>
<svg class="abs" style="left:40px;top:930px" width="24" height="28" viewBox="0 0 24 28"><path d="M5 3.5 Q5 1.5 8.5 1.5 Q12 1.5 12 4 L12 17 Q12 20.5 8.5 20.5 Q5 20.5 5 17Z" fill="none" stroke="#fff" stroke-width="1.5"></path><path d="M2.5 13 Q2.5 23 8.5 23 Q14.5 23 14.5 13 M8.5 23 V26.5 M4.5 26.5 H12.5" fill="none" stroke="#fff" stroke-width="1.5"></path><circle cx="16" cy="8" r="6.6" fill="#e8175d" stroke="#000" stroke-width="1"></circle><rect x="15.1" y="4" width="1.8" height="5" rx="0.9" fill="#000"></rect><circle cx="16" cy="11" r="1" fill="#000"></circle></svg>
<svg class="abs" style="left:77px;top:944px" width="10" height="7" viewBox="0 0 10 7"><path d="M1.5 5.5 L5 2 L8.5 5.5" fill="none" stroke="#ccc" stroke-width="1.3"></path></svg>
<div class="t zl" style="left: 34.8px; top: 964px; transform: scaleX(0.9692); transform-origin: left top;">Audio</div>
<svg class="abs" style="left:130px;top:934px" width="27" height="26" viewBox="0 0 27 26"><rect x="1.5" y="6" width="16" height="14" rx="3" fill="none" stroke="#fff" stroke-width="1.5"></rect><path d="M18 11 L24.5 7 V19 L18 15" fill="none" stroke="#fff" stroke-width="1.5" stroke-linejoin="round"></path><path d="M2 24.5 L24.5 2" stroke="#e8175d" stroke-width="2.4" stroke-linecap="round"></path></svg>
<div class="t zl" style="left: 127.5px; top: 964px; transform: scaleX(0.9543); transform-origin: left top;">Video</div>
<svg class="abs" style="left:418px;top:938px" width="20" height="19" viewBox="0 0 20 19"><circle cx="6" cy="4.5" r="3.5" fill="none" stroke="#fff" stroke-width="1.5"></circle><path d="M1 16 Q1 10 6 10 Q9 10 10.5 12" fill="none" stroke="#fff" stroke-width="1.5"></path><circle cx="13.5" cy="8.5" r="3" fill="none" stroke="#fff" stroke-width="1.5"></circle><rect x="8" y="12.5" width="11" height="5.5" rx="2.7" fill="none" stroke="#fff" stroke-width="1.5"></rect></svg>
<div class="t" style="left:444px;top:940px;font-size:11px;color:#fff">11</div>
<svg class="abs" style="left:476px;top:943px" width="10" height="7" viewBox="0 0 10 7"><path d="M1.5 5.5 L5 2 L8.5 5.5" fill="none" stroke="#ccc" stroke-width="1.3"></path></svg>
<div class="t zl" style="left: 397.6px; top: 964px; transform: scaleX(0.9432); transform-origin: left top;">Participants</div>
<svg class="abs" style="left:526px;top:935px" width="24" height="24" viewBox="0 0 24 24"><path d="M7.5 5 Q8 1.5 12 1.5 H18.5 Q22.5 1.5 22.5 5.5 V10 Q22.5 13.5 19 14" fill="none" stroke="#fff" stroke-width="1.5"></path><path d="M1.5 10.5 Q1.5 6 6 6 H13.5 Q18 6 18 10.5 V14 Q18 18.5 13.5 18.5 H8 L4.5 22 V18 Q1.5 17.5 1.5 14Z" fill="none" stroke="#fff" stroke-width="1.5" stroke-linejoin="round"></path><circle cx="6" cy="12.3" r="1.1" fill="#fff"></circle><circle cx="9.7" cy="12.3" r="1.1" fill="#fff"></circle><circle cx="13.4" cy="12.3" r="1.1" fill="#fff"></circle></svg>
<svg class="abs" style="left:566px;top:943px" width="10" height="7" viewBox="0 0 10 7"><path d="M1.5 5.5 L5 2 L8.5 5.5" fill="none" stroke="#ccc" stroke-width="1.3"></path></svg>
<div class="t zl" style="left: 526px; top: 964px; transform: scaleX(0.9202); transform-origin: left top;">Chat</div>
<svg class="abs" style="left:610px;top:936px" width="27" height="23" viewBox="0 0 27 23"><path d="M13.5 21 L3.5 11.5 Q0.5 8.5 1.5 5 Q3 1.2 7 1.2 Q10.5 1.2 13.5 5 Q16.5 1.2 20 1.2 Q24 1.2 25.5 5 Q26.5 8.5 23.5 11.5Z" fill="none" stroke="#fff" stroke-width="1.5" stroke-linejoin="round"></path></svg>
<svg class="abs" style="left:647px;top:943px" width="10" height="7" viewBox="0 0 10 7"><path d="M1.5 5.5 L5 2 L8.5 5.5" fill="none" stroke="#ccc" stroke-width="1.3"></path></svg>
<div class="t zl" style="left: 608.3px; top: 964px; transform: scaleX(0.888); transform-origin: left top;">React</div>
<svg class="abs" style="left:700px;top:937px" width="24" height="20" viewBox="0 0 24 20"><rect x="0" y="0" width="24" height="20" rx="2.5" fill="#1ed88a"></rect><path d="M12 4 L17 9 L13.4 9 L13.4 15 L10.6 15 L10.6 9 L7 9Z" fill="#000"></path></svg>
<div class="t zl" style="left: 697px; top: 964px; transform: scaleX(0.8993); transform-origin: left top;">Share</div>
<svg class="abs" style="left:796px;top:935px" width="23" height="23" viewBox="0 0 23 23"><path d="M9 5 Q10 12 17 13.5 Q10 15 9 22 Q8 15 1 13.5 Q8 12 9 5Z" fill="none" stroke="#f5c04a" stroke-width="1.5" stroke-linejoin="round"></path><path d="M17.5 1 Q18 4.5 21.5 5 Q18 5.5 17.5 9 Q17 5.5 13.5 5 Q17 4.5 17.5 1Z" fill="#f5c04a"></path></svg>
<div class="t zl" style="left: 769px; top: 964px; transform: scaleX(0.9644); transform-origin: left top;">AI Companion</div>
<svg class="abs" style="left:882px;top:936px" width="23" height="22" viewBox="0 0 23 22"><path d="M1.5 8 V5 Q1.5 1.5 5 1.5 H9" fill="none" stroke="#fff" stroke-width="1.5"></path><circle cx="17.5" cy="5" r="3.5" fill="none" stroke="#fff" stroke-width="1.5"></circle><circle cx="5" cy="16.5" r="3.5" fill="none" stroke="#fff" stroke-width="1.5"></circle><path d="M21.5 13 V16.5 Q21.5 20.5 17.5 20.5 H14" fill="none" stroke="#fff" stroke-width="1.5"></path></svg>
<div class="t zl" style="left: 880.5px; top: 964px; transform: scaleX(0.9228); transform-origin: left top;">Apps</div>
<svg class="abs" style="left:963px;top:934px" width="26" height="25" viewBox="0 0 26 25"><circle cx="13" cy="12.5" r="11.5" fill="none" stroke="#fff" stroke-width="1.5"></circle><circle cx="8" cy="12.5" r="1.4" fill="#fff"></circle><circle cx="13" cy="12.5" r="1.4" fill="#fff"></circle><circle cx="18" cy="12.5" r="1.4" fill="#fff"></circle></svg>
<div class="t zl" style="left: 962.5px; top: 964px; transform: scaleX(0.9654); transform-origin: left top;">More</div>
<svg class="abs" style="left:1218px;top:933px" width="26" height="27" viewBox="0 0 26 27"><path d="M9 1.5 H23.5 V20.5 L17 25.5 V6.5 L23.5 1.5" fill="none" stroke="#e8175d" stroke-width="1.4" stroke-linejoin="round"></path><circle cx="7" cy="6" r="2.6" fill="none" stroke="#fff" stroke-width="1.4"></circle><path d="M4 10 Q7 8.5 10 10 L12.5 14.5 L10.5 15.5 L9 13.5 L8.5 17.5 L10.5 25 L8.5 25.5 L6.5 19.5 L4 25.5 L1.5 25 L4.5 17 L4.5 13.5 L3 15 L1 14Z" fill="none" stroke="#fff" stroke-width="1.3" stroke-linejoin="round"></path></svg>
<div class="t zl" style="left: 1215.7px; top: 964px; transform: scaleX(0.8661); transform-origin: left top;">Leave</div>
<!-- TASKBAR -->
<div id="taskbar" class="abs"></div>
<svg class="abs" style="left:14px;top:996px" width="17" height="17" viewBox="0 0 17 17"><path d="M0 2.3 L7 1.3 V8 H0Z M8 1.2 L17 0 V8 H8Z M0 9 H7 V15.7 L0 14.7Z M8 9 H17 V17 L8 15.8Z" fill="#fff"></path></svg>
<div class="abs" style="left:46px;top:984px;width:288px;height:39px;background:#f3f3f3"></div>
<svg class="abs" style="left:57px;top:995px" width="19" height="19" viewBox="0 0 19 19"><circle cx="11.5" cy="7.5" r="5.5" fill="none" stroke="#222" stroke-width="1.4"></circle><path d="M7.5 11.5 L1.5 17.5" stroke="#222" stroke-width="1.6"></path></svg>
<div class="t" style="left: 86px; top: 996px; font-size: 15px; color: rgb(34, 34, 34); transform: scaleX(0.9655); transform-origin: left top;">Type here to search</div>
<svg class="abs" style="left:255px;top:985px" width="77" height="38" viewBox="0 0 77 38">
  <circle cx="30" cy="9" r="6" fill="#f6c96a"></circle>
  <path d="M5 30 Q30 24 70 30 L74 35 Q40 38 2 34Z" fill="#8ac8e8"></path>
  <path d="M8 26 L56 26 L60 33 L12 33Z" fill="#c9a98a"></path>
  <rect x="36" y="14" width="14" height="14" fill="#d8324a"></rect>
  <path d="M34 14 L43 6 L52 14Z" fill="#a8203a"></path>
  <rect x="41" y="2" width="5" height="6" fill="#f0e6d0"></rect>
  <rect x="12" y="16" width="9" height="11" fill="#f0f0f8"></rect>
  <path d="M10 16 L16.5 9 L23 16Z" fill="#5a4a9a"></path>
  <rect x="21" y="20" width="15" height="7" fill="#e8e0d0"></rect>
  <rect x="46" y="27" width="20" height="5" fill="#333"></rect>
</svg>
<svg class="abs" style="left:349px;top:997px" width="18" height="15" viewBox="0 0 18 15"><path d="M1 1 H13 M1 14 H13" stroke="#fff" stroke-width="1.3"></path><rect x="1.5" y="4" width="11" height="7" fill="none" stroke="#fff" stroke-width="1.3"></rect><path d="M16 1 V3 M16 5 V10 M16 12 V14" stroke="#fff" stroke-width="1.4"></path></svg>
<svg class="abs" style="left:398px;top:994px" width="24" height="21" viewBox="0 0 24 21"><path d="M0 2 H9 L11 4.5 H24 V20 H0Z" fill="#e8b43a"></path><path d="M0 7 H24 V20 H0Z" fill="#f8d06a"></path><rect x="8" y="11" width="8" height="5" fill="#2a7ad0"></rect><rect x="9.5" y="14" width="5" height="4" fill="#f8d06a"></rect></svg>
<svg class="abs" style="left:445px;top:992px" width="25" height="25" viewBox="0 0 25 25"><circle cx="12.5" cy="12.5" r="12" fill="#db4437"></circle><path d="M12.5 12.5 L23.9 8.5 A12 12 0 0 1 7 23.2Z" fill="#f4c20d"></path><path d="M12.5 12.5 L7 23.2 A12 12 0 0 1 1.6 7.5Z" fill="#0f9d58"></path><circle cx="12.5" cy="12.5" r="5.6" fill="#fff"></circle><circle cx="12.5" cy="12.5" r="4.4" fill="#4285f4"></circle></svg>
<svg class="abs" style="left:496px;top:993px" width="23" height="23" viewBox="0 0 23 23"><path d="M0 1 Q0 0 1 0 H22 Q23 0 23 1 V22 Q23 23 22 23 H1 Q0 23 0 22Z" fill="#f7c812"></path><path d="M7 23 L23 9 V22 Q23 23 22 23Z" fill="#f0a818"></path><path d="M8 20 L20 10 V20Z" fill="#4a4a44"></path></svg>
<svg class="abs" style="left:544px;top:992px" width="25" height="25" viewBox="0 0 25 25"><defs><linearGradient id="edg1" x1="0" y1="0" x2="1" y2="0.4"><stop offset="0" stop-color="#2aa0e0"></stop><stop offset="0.55" stop-color="#2fb8c8"></stop><stop offset="1" stop-color="#5ed86a"></stop></linearGradient></defs><circle cx="12.5" cy="12.5" r="12" fill="url(#edg1)"></circle><path d="M0.5 12.5 Q0.5 6 6 4.5 Q11 3.5 13 8 Q8 8 7 13 Q6.5 19 13 22 Q17 23.5 20.5 21.5 Q17 24.8 12.5 24.5 Q0.5 24 0.5 12.5Z" fill="#1a78d0"></path><path d="M7 13.5 Q7.5 19 13.5 21.5 Q17 22.5 20.5 21.5 Q15 19 13.5 16 Q11 16 10 13.5Z" fill="#0f5aa8"></path><circle cx="12" cy="12.8" r="2.8" fill="#1d2d38"></circle></svg>
<div class="abs" style="left:581px;top:984px;width:48px;height:39px;background:#46555e"></div>
<div class="abs" style="left:389px;top:1021px;width:40px;height:2px;background:#93b8dc"></div><div class="abs" style="left:438px;top:1021px;width:40px;height:2px;background:#93b8dc"></div><div class="abs" style="left:487px;top:1021px;width:39px;height:2px;background:#93b8dc"></div><div class="abs" style="left:536px;top:1021px;width:39px;height:2px;background:#93b8dc"></div><div class="abs" style="left:582px;top:1021px;width:46px;height:2px;background:#93b8dc"></div>
<svg class="abs" style="left:591px;top:991px" width="26" height="26" viewBox="0 0 26 26"><defs><linearGradient id="zmg" x1="0" y1="0" x2="0" y2="1"><stop offset="0" stop-color="#4a86f8"></stop><stop offset="1" stop-color="#1a4ed8"></stop></linearGradient></defs><circle cx="13" cy="13" r="12.3" fill="url(#zmg)"></circle><text x="13" y="16.3" text-anchor="middle" font-family="Liberation Sans" font-weight="700" font-size="10.5" fill="#f0f4ff">zm</text></svg>
<svg class="abs" style="left:936px;top:992px" width="26" height="24" viewBox="0 0 26 24"><circle cx="11.5" cy="12" r="10.5" fill="#f5931e"></circle><circle cx="9" cy="10" r="6" fill="#f8b040" opacity="0.7"></circle><circle cx="17" cy="5.5" r="5.2" fill="#d8201e" stroke="#1d2b3a" stroke-width="0.5"></circle><text x="17" y="8.3" text-anchor="middle" font-family="Liberation Sans" font-size="7.5" fill="#fff">1</text></svg>
<div class="t" style="left: 967px; top: 996px; font-size: 14.5px; color: rgb(255, 255, 255); white-space: pre; transform: scaleX(0.913); transform-origin: left top;">23°C  Cerah</div>
<svg class="abs" style="left:1065px;top:998px" width="13" height="9" viewBox="0 0 13 9"><path d="M1 8 L6.5 2 L12 8" fill="none" stroke="#fff" stroke-width="1.3"></path></svg>
<svg class="abs" style="left:1087px;top:996px" width="17" height="17" viewBox="0 0 17 17"><rect x="4.5" y="3.5" width="12" height="9" fill="none" stroke="#fff" stroke-width="1.2"></rect><path d="M10.5 12.5 V15.5 M6.5 16 H14.5" stroke="#fff" stroke-width="1.2"></path><rect x="0.5" y="1" width="5" height="5" fill="#1c2b3c" stroke="#fff" stroke-width="1"></rect></svg>
<svg class="abs" style="left:1114px;top:995px" width="13" height="18" viewBox="0 0 13 18"><path d="M2 3 Q1 9 2 15 M11 3 Q12 9 11 15" fill="none" stroke="#fff" stroke-width="1"></path><rect x="2.5" y="6" width="6" height="6" rx="1" fill="none" stroke="#fff" stroke-width="1.2"></rect><path d="M8.5 8 L11 6.5 V11.5 L8.5 10" fill="none" stroke="#fff" stroke-width="1"></path></svg>
<svg class="abs" style="left:1135px;top:996px" width="17" height="17" viewBox="0 0 17 17"><path d="M1 6 H4 L8 2 V15 L4 11 H1Z" fill="none" stroke="#fff" stroke-width="1.2" stroke-linejoin="round"></path><path d="M10.5 6 Q12 8.5 10.5 11 M12.5 4 Q15 8.5 12.5 13 M14.5 2 Q18 8.5 14.5 15" fill="none" stroke="#fff" stroke-width="1.1"></path></svg>
<div class="t" style="left: 1176.6px; top: 989px; font-size: 12.5px; color: rgb(255, 255, 255); transform: scaleX(0.8472); transform-origin: left top;">10.28</div>
<div class="t" style="left: 1161px; top: 1006px; font-size: 12.5px; color: rgb(255, 255, 255); transform: scaleX(0.9271); transform-origin: left top;">07/08/2024</div>
<svg class="abs" style="left:1237px;top:995px" width="17" height="18" viewBox="0 0 17 18"><path d="M0.5 0.5 H16.5 V13.5 H11 L8.5 17 L6 13.5 H0.5Z" fill="#fff"></path><path d="M3.5 4 H13.5 M3.5 6.8 H13.5 M3.5 9.6 H10" stroke="#1c2b3c" stroke-width="1.1"></path></svg>
<div class="abs" style="left:1274px;top:984px;width:1px;height:39px;background:#5a6a7a"></div>


</body></html>
